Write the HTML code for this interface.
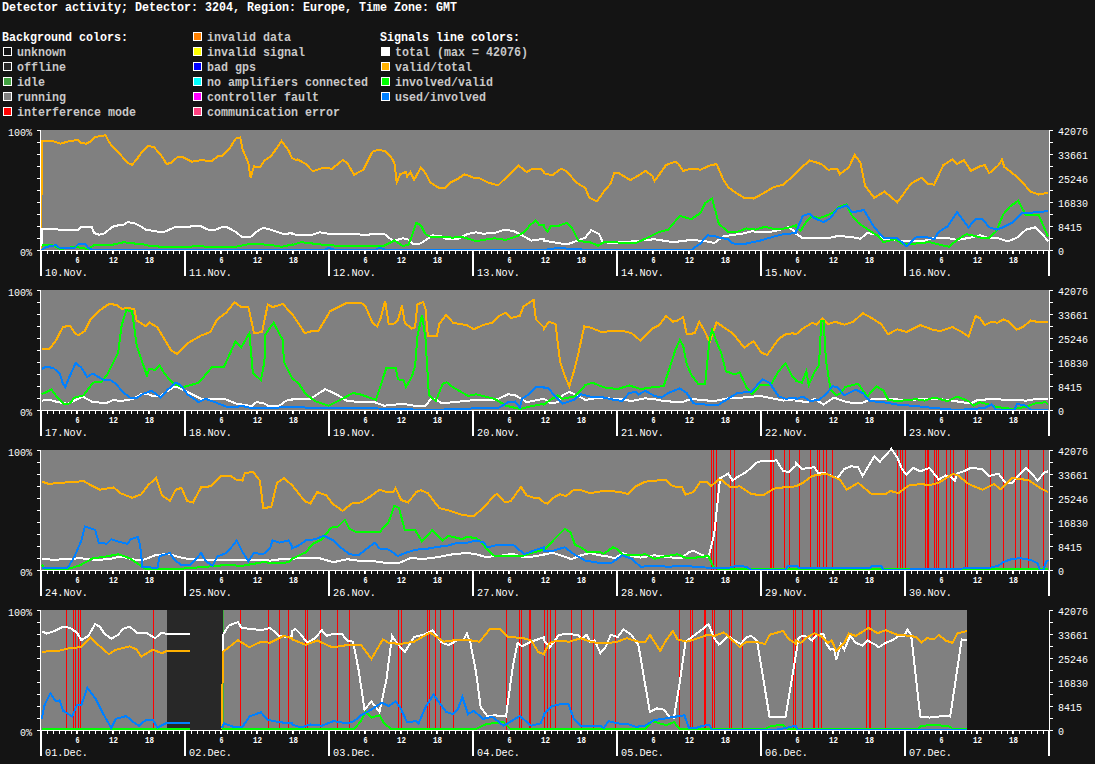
<!DOCTYPE html>
<html><head><meta charset="utf-8"><style>
html,body{margin:0;padding:0;background:#141414;overflow:hidden;width:1095px;height:764px}
</style></head><body>
<svg width="1095" height="764" viewBox="0 0 1095 764" style="display:block">
<rect x="0" y="0" width="1095" height="764" fill="#141414"/>
<g font-family='"Liberation Mono", monospace'>
<text x="2" y="11" font-size="12.2" fill="#fff" text-anchor="start" font-weight="bold" textLength="455" lengthAdjust="spacingAndGlyphs" >Detector activity; Detector: 3204, Region: Europe, Time Zone: GMT</text>
<text x="2" y="41" font-size="12.2" fill="#fff" text-anchor="start" font-weight="bold" textLength="126" lengthAdjust="spacingAndGlyphs" >Background colors:</text>
<text x="380" y="41" font-size="12.2" fill="#fff" text-anchor="start" font-weight="bold" textLength="140" lengthAdjust="spacingAndGlyphs" >Signals line colors:</text>
<rect x="3.5" y="47.5" width="8" height="8" fill="#141414" stroke="#fff" stroke-width="1"/>
<text x="17" y="56" font-size="12.2" fill="#c8c8c8" text-anchor="start" font-weight="bold" textLength="49" lengthAdjust="spacingAndGlyphs" >unknown</text>
<rect x="3.5" y="62.5" width="8" height="8" fill="#282828" stroke="#fff" stroke-width="1"/>
<text x="17" y="71" font-size="12.2" fill="#c8c8c8" text-anchor="start" font-weight="bold" textLength="49" lengthAdjust="spacingAndGlyphs" >offline</text>
<rect x="3.5" y="77.5" width="8" height="8" fill="#40a040" stroke="#fff" stroke-width="1"/>
<text x="17" y="86" font-size="12.2" fill="#c8c8c8" text-anchor="start" font-weight="bold" textLength="28" lengthAdjust="spacingAndGlyphs" >idle</text>
<rect x="3.5" y="92.5" width="8" height="8" fill="#808080" stroke="#fff" stroke-width="1"/>
<text x="17" y="101" font-size="12.2" fill="#c8c8c8" text-anchor="start" font-weight="bold" textLength="49" lengthAdjust="spacingAndGlyphs" >running</text>
<rect x="3.5" y="107.5" width="8" height="8" fill="#ff0000" stroke="#fff" stroke-width="1"/>
<text x="17" y="116" font-size="12.2" fill="#c8c8c8" text-anchor="start" font-weight="bold" textLength="119" lengthAdjust="spacingAndGlyphs" >interference mode</text>
<rect x="193.5" y="32.5" width="8" height="8" fill="#ff8000" stroke="#fff" stroke-width="1"/>
<text x="207" y="41" font-size="12.2" fill="#c8c8c8" text-anchor="start" font-weight="bold" textLength="84" lengthAdjust="spacingAndGlyphs" >invalid data</text>
<rect x="193.5" y="47.5" width="8" height="8" fill="#ffff00" stroke="#fff" stroke-width="1"/>
<text x="207" y="56" font-size="12.2" fill="#c8c8c8" text-anchor="start" font-weight="bold" textLength="98" lengthAdjust="spacingAndGlyphs" >invalid signal</text>
<rect x="193.5" y="62.5" width="8" height="8" fill="#0000ff" stroke="#fff" stroke-width="1"/>
<text x="207" y="71" font-size="12.2" fill="#c8c8c8" text-anchor="start" font-weight="bold" textLength="49" lengthAdjust="spacingAndGlyphs" >bad gps</text>
<rect x="193.5" y="77.5" width="8" height="8" fill="#00ffff" stroke="#fff" stroke-width="1"/>
<text x="207" y="86" font-size="12.2" fill="#c8c8c8" text-anchor="start" font-weight="bold" textLength="161" lengthAdjust="spacingAndGlyphs" >no amplifiers connected</text>
<rect x="193.5" y="92.5" width="8" height="8" fill="#ff00ff" stroke="#fff" stroke-width="1"/>
<text x="207" y="101" font-size="12.2" fill="#c8c8c8" text-anchor="start" font-weight="bold" textLength="112" lengthAdjust="spacingAndGlyphs" >controller fault</text>
<rect x="193.5" y="107.5" width="8" height="8" fill="#ff4080" stroke="#fff" stroke-width="1"/>
<text x="207" y="116" font-size="12.2" fill="#c8c8c8" text-anchor="start" font-weight="bold" textLength="133" lengthAdjust="spacingAndGlyphs" >communication error</text>
<rect x="381.5" y="47.5" width="8" height="8" fill="#ffffff" stroke="#fff" stroke-width="1"/>
<text x="395" y="56" font-size="12.2" fill="#c8c8c8" text-anchor="start" font-weight="bold" textLength="133" lengthAdjust="spacingAndGlyphs" >total (max = 42076)</text>
<rect x="381.5" y="62.5" width="8" height="8" fill="#ffb000" stroke="#fff" stroke-width="1"/>
<text x="395" y="71" font-size="12.2" fill="#c8c8c8" text-anchor="start" font-weight="bold" textLength="77" lengthAdjust="spacingAndGlyphs" >valid/total</text>
<rect x="381.5" y="77.5" width="8" height="8" fill="#00ff00" stroke="#fff" stroke-width="1"/>
<text x="395" y="86" font-size="12.2" fill="#c8c8c8" text-anchor="start" font-weight="bold" textLength="98" lengthAdjust="spacingAndGlyphs" >involved/valid</text>
<rect x="381.5" y="92.5" width="8" height="8" fill="#0080ff" stroke="#fff" stroke-width="1"/>
<text x="395" y="101" font-size="12.2" fill="#c8c8c8" text-anchor="start" font-weight="bold" textLength="91" lengthAdjust="spacingAndGlyphs" >used/involved</text>
</g>
<g transform="translate(0,0)">
<rect x="41" y="130" width="1008" height="120" fill="#808080"/>
<rect x="41" y="194" width="1" height="56" fill="#ffb000"/><polyline points="41.8,245.7 41.8,229.1 56.1,229.1 59.6,230.0 78.0,229.6 80.3,227.3 91.8,227.3 94.1,233.0 98.7,234.6 103.3,234.2 112.5,226.8 119.4,225.0 124.0,224.5 127.5,222.2 134.4,223.1 139.0,225.4 145.9,229.6 159.7,231.9 164.3,231.9 175.8,226.8 201.1,226.3 208.0,229.6 214.9,230.0 223.0,226.8 226.4,226.8 235.6,231.9 241.4,236.5 250.6,236.9 256.3,231.9 263.2,227.7 270.1,229.6 283.9,234.2 292.0,233.0 292.0,234.2 301.2,235.3 310.4,235.3 319.6,232.3 331.1,234.2 358.7,234.2 365.6,235.5 372.5,233.7 384.1,233.7 393.3,241.1 402.5,238.3 407.1,238.8 414.0,244.5 420.9,243.4 432.4,235.3 441.6,236.5 446.2,238.8 457.7,238.8 466.9,234.2 476.1,232.3 483.0,233.7 494.5,233.0 503.7,230.0 512.9,230.7 522.1,235.3 531.3,240.6 544.0,238.8 544.0,240.6 553.2,242.2 567.0,244.5 576.2,241.1 585.4,237.6 591.2,230.0 599.2,234.2 602.7,242.2 613.0,242.9 636.1,241.1 654.5,239.2 672.9,242.2 691.3,239.9 705.1,241.1 714.3,242.9 723.5,236.5 730.4,235.3 741.9,233.7 751.1,231.4 762.6,231.9 774.1,231.4 787.9,227.3 796.0,231.9 796.0,233.7 802.9,238.3 828.2,238.3 837.4,236.0 851.2,236.9 860.4,238.8 867.3,233.0 874.2,234.2 883.5,238.8 899.6,240.6 924.9,240.6 934.1,237.6 945.6,237.6 957.1,239.9 970.9,237.6 980.1,235.3 989.3,238.3 998.5,238.3 1007.7,241.5 1016.9,237.6 1026.1,229.6 1035.3,227.3 1042.2,234.2 1048.0,241.1" fill="none" stroke="#ffffff" stroke-width="2" stroke-linejoin="miter" shape-rendering="crispEdges"/>
<polyline points="41.8,195.0 41.8,141.0 52.7,141.0 60.7,143.7 67.6,141.6 78.0,139.8 80.3,142.8 86.0,143.7 89.5,142.1 94.1,137.5 98.7,136.4 105.6,135.2 109.0,142.1 113.6,147.9 120.5,154.8 127.5,162.8 132.1,164.7 136.7,159.4 142.4,151.3 148.2,146.0 153.9,147.2 160.8,154.8 166.6,164.0 171.2,162.8 178.1,156.6 182.7,157.1 191.9,161.7 201.1,160.1 211.5,161.2 218.4,155.9 221.8,155.9 229.9,147.9 235.6,138.7 240.2,137.5 242.5,149.0 248.3,162.8 250.6,177.8 254.0,166.3 259.8,167.4 264.4,160.5 271.3,155.9 281.6,141.0 288.5,150.2 292.0,158.2 292.0,158.2 296.6,160.1 297.8,159.4 305.8,164.0 312.7,171.3 321.9,168.1 332.3,168.6 342.6,160.1 347.2,162.8 354.1,174.8 363.3,169.7 372.5,151.8 378.3,149.5 385.2,151.3 391.0,157.1 394.4,162.8 396.7,182.4 400.2,174.3 405.9,172.0 407.1,176.6 410.5,172.0 414.0,180.1 420.9,167.4 425.5,173.2 430.1,182.4 439.3,188.1 445.0,188.1 450.8,182.4 457.7,178.9 464.6,174.3 473.8,177.8 478.4,177.8 487.6,182.4 498.0,185.4 508.3,175.5 518.7,165.6 526.7,172.0 531.3,169.3 540.5,168.6 544.0,172.0 544.0,173.2 548.6,174.3 552.1,175.5 561.3,168.6 567.0,171.6 576.2,182.4 585.4,188.1 588.9,197.3 596.9,201.5 603.8,191.6 610.7,183.5 614.2,173.2 618.8,173.2 630.3,180.1 638.4,175.5 645.3,170.9 652.2,175.5 654.5,181.2 666.0,165.1 675.2,161.7 678.6,164.0 683.2,170.9 691.3,168.6 700.5,169.7 709.7,165.6 716.6,164.0 723.5,180.1 728.1,187.0 735.0,192.3 744.2,197.8 753.4,198.5 760.3,195.0 774.1,187.0 783.3,184.7 796.0,173.2 796.0,173.2 802.9,166.3 809.8,160.5 821.3,164.0 828.2,169.7 837.4,168.6 839.7,174.3 848.9,167.4 854.7,154.8 860.4,162.8 865.0,185.8 874.2,197.8 884.6,191.6 897.3,202.4 911.1,183.5 921.4,177.8 927.2,183.5 934.1,184.7 943.3,165.1 952.5,159.4 957.1,164.0 964.0,160.1 970.9,170.9 980.1,166.3 984.7,165.1 989.3,173.2 998.5,165.1 1002.0,159.4 1004.3,167.0 1016.9,176.6 1030.7,191.6 1038.8,194.6 1048.0,192.7" fill="none" stroke="#ffb000" stroke-width="2" stroke-linejoin="miter" shape-rendering="crispEdges"/>
<polyline points="41.8,245.7 46.9,244.5 53.8,245.7 60.7,249.0 74.5,246.8 88.3,249.0 95.2,244.5 113.6,244.5 124.0,242.2 132.1,243.4 141.3,243.8 150.5,246.1 164.3,246.8 182.7,247.3 196.5,246.1 219.5,247.3 233.3,247.3 247.1,244.5 256.3,243.8 272.4,245.2 281.6,246.8 292.0,244.5 292.0,245.2 301.2,242.2 315.0,243.8 326.5,245.2 349.5,246.1 372.5,246.1 384.1,245.7 394.4,240.6 402.5,245.7 408.2,245.2 411.7,236.5 416.3,222.7 420.9,225.4 425.5,234.2 430.1,236.5 453.1,237.6 462.3,236.9 476.1,241.1 487.6,239.2 494.5,238.3 506.0,239.9 517.5,236.0 524.4,231.9 530.2,225.0 535.9,220.4 539.4,225.4 544.0,225.4 544.0,227.3 547.5,231.4 550.9,226.1 557.8,226.1 567.0,222.7 571.6,227.3 578.5,241.1 590.0,242.2 598.1,245.7 603.8,242.2 636.1,242.9 645.3,238.8 659.1,231.9 668.3,229.6 679.8,215.8 691.3,219.2 700.5,213.0 705.1,203.1 712.0,198.5 718.9,223.8 728.1,231.9 737.3,231.9 746.5,228.4 755.7,229.6 764.9,226.8 774.1,229.1 785.6,228.4 796.0,225.4 796.0,227.3 800.6,230.7 806.4,221.5 812.1,216.2 819.0,218.1 825.9,215.8 834.0,212.3 839.7,206.5 846.6,204.2 851.2,214.6 858.1,222.7 869.6,230.7 878.8,236.5 883.5,242.2 895.0,239.2 904.2,244.5 913.4,243.8 929.5,242.2 938.7,244.5 949.0,246.8 957.1,239.9 966.3,234.2 975.5,236.0 980.1,237.6 989.3,237.6 996.2,231.4 1003.1,214.6 1010.0,206.5 1018.1,200.8 1023.8,211.2 1026.1,215.3 1038.8,215.3 1048.0,236.5" fill="none" stroke="#00ff00" stroke-width="2" stroke-linejoin="miter" shape-rendering="crispEdges"/>
<polyline points="41.8,250.0 46.9,246.8 56.1,245.2 59.6,248.0 74.5,248.0 78.0,244.5 84.9,243.8 88.3,248.0 92.9,250.0 270.1,250.0 292.0,250.0 292.0,250.0 324.2,250.0 328.8,248.0 335.7,250.0 374.8,250.0 379.5,247.7 386.4,250.0 512.9,250.0 517.5,250.0 540.5,250.0 544.0,250.0 544.0,250.0 557.8,248.0 590.0,250.0 691.3,250.0 700.5,243.4 707.4,235.3 714.3,236.0 721.2,238.3 728.1,238.8 732.7,243.4 741.9,244.5 760.3,240.6 774.1,236.5 783.3,234.2 796.0,233.0 796.0,231.9 802.9,215.8 809.8,213.5 814.4,218.1 823.6,222.2 830.5,218.1 837.4,208.8 846.6,205.4 852.4,212.3 858.1,211.2 863.9,210.0 874.2,227.3 883.5,237.6 897.3,238.3 906.5,246.1 915.7,237.6 924.9,236.5 934.1,239.2 938.7,231.9 947.9,226.1 957.1,212.3 968.6,227.3 975.5,219.2 982.4,219.2 989.3,227.3 996.2,229.6 1003.1,227.3 1012.3,222.7 1021.5,213.5 1035.3,212.3 1048.0,211.2" fill="none" stroke="#0080ff" stroke-width="2" stroke-linejoin="miter" shape-rendering="crispEdges"/>
<g fill="#fff" shape-rendering="crispEdges">
<rect x="40" y="130" width="1" height="121"/>
<rect x="1049" y="130" width="1" height="121"/>
<rect x="37" y="250" width="1016" height="1"/>
<rect x="37" y="130" width="3" height="1"/>
<rect x="1050" y="130" width="3" height="1"/>
<rect x="37" y="142" width="3" height="1"/>
<rect x="1050" y="142" width="3" height="1"/>
<rect x="37" y="154" width="3" height="1"/>
<rect x="1050" y="154" width="3" height="1"/>
<rect x="37" y="166" width="3" height="1"/>
<rect x="1050" y="166" width="3" height="1"/>
<rect x="37" y="178" width="3" height="1"/>
<rect x="1050" y="178" width="3" height="1"/>
<rect x="37" y="190" width="3" height="1"/>
<rect x="1050" y="190" width="3" height="1"/>
<rect x="37" y="202" width="3" height="1"/>
<rect x="1050" y="202" width="3" height="1"/>
<rect x="37" y="214" width="3" height="1"/>
<rect x="1050" y="214" width="3" height="1"/>
<rect x="37" y="226" width="3" height="1"/>
<rect x="1050" y="226" width="3" height="1"/>
<rect x="37" y="238" width="3" height="1"/>
<rect x="1050" y="238" width="3" height="1"/>
<rect x="37" y="250" width="3" height="1"/>
<rect x="1050" y="250" width="3" height="1"/>
<rect x="40" y="251" width="2" height="25"/>
<rect x="47" y="251" width="1" height="3"/>
<rect x="53" y="251" width="1" height="3"/>
<rect x="59" y="251" width="1" height="3"/>
<rect x="65" y="251" width="1" height="3"/>
<rect x="71" y="251" width="1" height="3"/>
<rect x="76" y="251" width="2" height="3"/>
<rect x="83" y="251" width="1" height="3"/>
<rect x="89" y="251" width="1" height="3"/>
<rect x="95" y="251" width="1" height="3"/>
<rect x="101" y="251" width="1" height="3"/>
<rect x="107" y="251" width="1" height="3"/>
<rect x="112" y="251" width="2" height="3"/>
<rect x="119" y="251" width="1" height="3"/>
<rect x="125" y="251" width="1" height="3"/>
<rect x="131" y="251" width="1" height="3"/>
<rect x="137" y="251" width="1" height="3"/>
<rect x="143" y="251" width="1" height="3"/>
<rect x="148" y="251" width="2" height="3"/>
<rect x="155" y="251" width="1" height="3"/>
<rect x="161" y="251" width="1" height="3"/>
<rect x="167" y="251" width="1" height="3"/>
<rect x="173" y="251" width="1" height="3"/>
<rect x="179" y="251" width="1" height="3"/>
<rect x="184" y="251" width="2" height="25"/>
<rect x="191" y="251" width="1" height="3"/>
<rect x="197" y="251" width="1" height="3"/>
<rect x="203" y="251" width="1" height="3"/>
<rect x="209" y="251" width="1" height="3"/>
<rect x="215" y="251" width="1" height="3"/>
<rect x="220" y="251" width="2" height="3"/>
<rect x="227" y="251" width="1" height="3"/>
<rect x="233" y="251" width="1" height="3"/>
<rect x="239" y="251" width="1" height="3"/>
<rect x="245" y="251" width="1" height="3"/>
<rect x="251" y="251" width="1" height="3"/>
<rect x="256" y="251" width="2" height="3"/>
<rect x="263" y="251" width="1" height="3"/>
<rect x="269" y="251" width="1" height="3"/>
<rect x="275" y="251" width="1" height="3"/>
<rect x="281" y="251" width="1" height="3"/>
<rect x="287" y="251" width="1" height="3"/>
<rect x="292" y="251" width="2" height="3"/>
<rect x="299" y="251" width="1" height="3"/>
<rect x="305" y="251" width="1" height="3"/>
<rect x="311" y="251" width="1" height="3"/>
<rect x="317" y="251" width="1" height="3"/>
<rect x="323" y="251" width="1" height="3"/>
<rect x="328" y="251" width="2" height="25"/>
<rect x="335" y="251" width="1" height="3"/>
<rect x="341" y="251" width="1" height="3"/>
<rect x="347" y="251" width="1" height="3"/>
<rect x="353" y="251" width="1" height="3"/>
<rect x="359" y="251" width="1" height="3"/>
<rect x="364" y="251" width="2" height="3"/>
<rect x="371" y="251" width="1" height="3"/>
<rect x="377" y="251" width="1" height="3"/>
<rect x="383" y="251" width="1" height="3"/>
<rect x="389" y="251" width="1" height="3"/>
<rect x="395" y="251" width="1" height="3"/>
<rect x="400" y="251" width="2" height="3"/>
<rect x="407" y="251" width="1" height="3"/>
<rect x="413" y="251" width="1" height="3"/>
<rect x="419" y="251" width="1" height="3"/>
<rect x="425" y="251" width="1" height="3"/>
<rect x="431" y="251" width="1" height="3"/>
<rect x="436" y="251" width="2" height="3"/>
<rect x="443" y="251" width="1" height="3"/>
<rect x="449" y="251" width="1" height="3"/>
<rect x="455" y="251" width="1" height="3"/>
<rect x="461" y="251" width="1" height="3"/>
<rect x="467" y="251" width="1" height="3"/>
<rect x="472" y="251" width="2" height="25"/>
<rect x="479" y="251" width="1" height="3"/>
<rect x="485" y="251" width="1" height="3"/>
<rect x="491" y="251" width="1" height="3"/>
<rect x="497" y="251" width="1" height="3"/>
<rect x="503" y="251" width="1" height="3"/>
<rect x="508" y="251" width="2" height="3"/>
<rect x="515" y="251" width="1" height="3"/>
<rect x="521" y="251" width="1" height="3"/>
<rect x="527" y="251" width="1" height="3"/>
<rect x="533" y="251" width="1" height="3"/>
<rect x="539" y="251" width="1" height="3"/>
<rect x="544" y="251" width="2" height="3"/>
<rect x="551" y="251" width="1" height="3"/>
<rect x="557" y="251" width="1" height="3"/>
<rect x="563" y="251" width="1" height="3"/>
<rect x="569" y="251" width="1" height="3"/>
<rect x="575" y="251" width="1" height="3"/>
<rect x="580" y="251" width="2" height="3"/>
<rect x="587" y="251" width="1" height="3"/>
<rect x="593" y="251" width="1" height="3"/>
<rect x="599" y="251" width="1" height="3"/>
<rect x="605" y="251" width="1" height="3"/>
<rect x="611" y="251" width="1" height="3"/>
<rect x="616" y="251" width="2" height="25"/>
<rect x="623" y="251" width="1" height="3"/>
<rect x="629" y="251" width="1" height="3"/>
<rect x="635" y="251" width="1" height="3"/>
<rect x="641" y="251" width="1" height="3"/>
<rect x="647" y="251" width="1" height="3"/>
<rect x="652" y="251" width="2" height="3"/>
<rect x="659" y="251" width="1" height="3"/>
<rect x="665" y="251" width="1" height="3"/>
<rect x="671" y="251" width="1" height="3"/>
<rect x="677" y="251" width="1" height="3"/>
<rect x="683" y="251" width="1" height="3"/>
<rect x="688" y="251" width="2" height="3"/>
<rect x="695" y="251" width="1" height="3"/>
<rect x="701" y="251" width="1" height="3"/>
<rect x="707" y="251" width="1" height="3"/>
<rect x="713" y="251" width="1" height="3"/>
<rect x="719" y="251" width="1" height="3"/>
<rect x="724" y="251" width="2" height="3"/>
<rect x="731" y="251" width="1" height="3"/>
<rect x="737" y="251" width="1" height="3"/>
<rect x="743" y="251" width="1" height="3"/>
<rect x="749" y="251" width="1" height="3"/>
<rect x="755" y="251" width="1" height="3"/>
<rect x="760" y="251" width="2" height="25"/>
<rect x="767" y="251" width="1" height="3"/>
<rect x="773" y="251" width="1" height="3"/>
<rect x="779" y="251" width="1" height="3"/>
<rect x="785" y="251" width="1" height="3"/>
<rect x="791" y="251" width="1" height="3"/>
<rect x="796" y="251" width="2" height="3"/>
<rect x="803" y="251" width="1" height="3"/>
<rect x="809" y="251" width="1" height="3"/>
<rect x="815" y="251" width="1" height="3"/>
<rect x="821" y="251" width="1" height="3"/>
<rect x="827" y="251" width="1" height="3"/>
<rect x="832" y="251" width="2" height="3"/>
<rect x="839" y="251" width="1" height="3"/>
<rect x="845" y="251" width="1" height="3"/>
<rect x="851" y="251" width="1" height="3"/>
<rect x="857" y="251" width="1" height="3"/>
<rect x="863" y="251" width="1" height="3"/>
<rect x="868" y="251" width="2" height="3"/>
<rect x="875" y="251" width="1" height="3"/>
<rect x="881" y="251" width="1" height="3"/>
<rect x="887" y="251" width="1" height="3"/>
<rect x="893" y="251" width="1" height="3"/>
<rect x="899" y="251" width="1" height="3"/>
<rect x="904" y="251" width="2" height="25"/>
<rect x="911" y="251" width="1" height="3"/>
<rect x="917" y="251" width="1" height="3"/>
<rect x="923" y="251" width="1" height="3"/>
<rect x="929" y="251" width="1" height="3"/>
<rect x="935" y="251" width="1" height="3"/>
<rect x="940" y="251" width="2" height="3"/>
<rect x="947" y="251" width="1" height="3"/>
<rect x="953" y="251" width="1" height="3"/>
<rect x="959" y="251" width="1" height="3"/>
<rect x="965" y="251" width="1" height="3"/>
<rect x="971" y="251" width="1" height="3"/>
<rect x="976" y="251" width="2" height="3"/>
<rect x="983" y="251" width="1" height="3"/>
<rect x="989" y="251" width="1" height="3"/>
<rect x="995" y="251" width="1" height="3"/>
<rect x="1001" y="251" width="1" height="3"/>
<rect x="1007" y="251" width="1" height="3"/>
<rect x="1012" y="251" width="2" height="3"/>
<rect x="1019" y="251" width="1" height="3"/>
<rect x="1025" y="251" width="1" height="3"/>
<rect x="1031" y="251" width="1" height="3"/>
<rect x="1037" y="251" width="1" height="3"/>
<rect x="1043" y="251" width="1" height="3"/>
<rect x="1048" y="251" width="2" height="25"/>
</g>
<g font-family='"Liberation Mono", monospace' fill="#fff">
<text x="32" y="136" font-size="11.8" fill="#fff" text-anchor="end" textLength="24" lengthAdjust="spacingAndGlyphs" >100%</text>
<text x="32" y="256" font-size="11.8" fill="#fff" text-anchor="end" textLength="12" lengthAdjust="spacingAndGlyphs" >0%</text>
<text x="1058" y="135" font-size="11.8" fill="#fff" text-anchor="start" textLength="30" lengthAdjust="spacingAndGlyphs" >42076</text>
<text x="1058" y="159" font-size="11.8" fill="#fff" text-anchor="start" textLength="30" lengthAdjust="spacingAndGlyphs" >33661</text>
<text x="1058" y="183" font-size="11.8" fill="#fff" text-anchor="start" textLength="30" lengthAdjust="spacingAndGlyphs" >25246</text>
<text x="1058" y="207" font-size="11.8" fill="#fff" text-anchor="start" textLength="30" lengthAdjust="spacingAndGlyphs" >16830</text>
<text x="1058" y="231" font-size="11.8" fill="#fff" text-anchor="start" textLength="24" lengthAdjust="spacingAndGlyphs" >8415</text>
<text x="1058" y="255" font-size="11.8" fill="#fff" text-anchor="start" textLength="6" lengthAdjust="spacingAndGlyphs" >0</text>
<text x="45" y="276" font-size="11.8" fill="#fff" text-anchor="start" textLength="43" lengthAdjust="spacingAndGlyphs" >10.Nov.</text>
<text x="77.5" y="263" font-size="8.2" fill="#fff" text-anchor="middle" font-weight="bold" textLength="4" lengthAdjust="spacingAndGlyphs" >6</text>
<text x="113.5" y="263" font-size="8.2" fill="#fff" text-anchor="middle" font-weight="bold" textLength="9" lengthAdjust="spacingAndGlyphs" >12</text>
<text x="149.5" y="263" font-size="8.2" fill="#fff" text-anchor="middle" font-weight="bold" textLength="9" lengthAdjust="spacingAndGlyphs" >18</text>
<text x="189" y="276" font-size="11.8" fill="#fff" text-anchor="start" textLength="43" lengthAdjust="spacingAndGlyphs" >11.Nov.</text>
<text x="221.5" y="263" font-size="8.2" fill="#fff" text-anchor="middle" font-weight="bold" textLength="4" lengthAdjust="spacingAndGlyphs" >6</text>
<text x="257.5" y="263" font-size="8.2" fill="#fff" text-anchor="middle" font-weight="bold" textLength="9" lengthAdjust="spacingAndGlyphs" >12</text>
<text x="293.5" y="263" font-size="8.2" fill="#fff" text-anchor="middle" font-weight="bold" textLength="9" lengthAdjust="spacingAndGlyphs" >18</text>
<text x="333" y="276" font-size="11.8" fill="#fff" text-anchor="start" textLength="43" lengthAdjust="spacingAndGlyphs" >12.Nov.</text>
<text x="365.5" y="263" font-size="8.2" fill="#fff" text-anchor="middle" font-weight="bold" textLength="4" lengthAdjust="spacingAndGlyphs" >6</text>
<text x="401.5" y="263" font-size="8.2" fill="#fff" text-anchor="middle" font-weight="bold" textLength="9" lengthAdjust="spacingAndGlyphs" >12</text>
<text x="437.5" y="263" font-size="8.2" fill="#fff" text-anchor="middle" font-weight="bold" textLength="9" lengthAdjust="spacingAndGlyphs" >18</text>
<text x="477" y="276" font-size="11.8" fill="#fff" text-anchor="start" textLength="43" lengthAdjust="spacingAndGlyphs" >13.Nov.</text>
<text x="509.5" y="263" font-size="8.2" fill="#fff" text-anchor="middle" font-weight="bold" textLength="4" lengthAdjust="spacingAndGlyphs" >6</text>
<text x="545.5" y="263" font-size="8.2" fill="#fff" text-anchor="middle" font-weight="bold" textLength="9" lengthAdjust="spacingAndGlyphs" >12</text>
<text x="581.5" y="263" font-size="8.2" fill="#fff" text-anchor="middle" font-weight="bold" textLength="9" lengthAdjust="spacingAndGlyphs" >18</text>
<text x="621" y="276" font-size="11.8" fill="#fff" text-anchor="start" textLength="43" lengthAdjust="spacingAndGlyphs" >14.Nov.</text>
<text x="653.5" y="263" font-size="8.2" fill="#fff" text-anchor="middle" font-weight="bold" textLength="4" lengthAdjust="spacingAndGlyphs" >6</text>
<text x="689.5" y="263" font-size="8.2" fill="#fff" text-anchor="middle" font-weight="bold" textLength="9" lengthAdjust="spacingAndGlyphs" >12</text>
<text x="725.5" y="263" font-size="8.2" fill="#fff" text-anchor="middle" font-weight="bold" textLength="9" lengthAdjust="spacingAndGlyphs" >18</text>
<text x="765" y="276" font-size="11.8" fill="#fff" text-anchor="start" textLength="43" lengthAdjust="spacingAndGlyphs" >15.Nov.</text>
<text x="797.5" y="263" font-size="8.2" fill="#fff" text-anchor="middle" font-weight="bold" textLength="4" lengthAdjust="spacingAndGlyphs" >6</text>
<text x="833.5" y="263" font-size="8.2" fill="#fff" text-anchor="middle" font-weight="bold" textLength="9" lengthAdjust="spacingAndGlyphs" >12</text>
<text x="869.5" y="263" font-size="8.2" fill="#fff" text-anchor="middle" font-weight="bold" textLength="9" lengthAdjust="spacingAndGlyphs" >18</text>
<text x="909" y="276" font-size="11.8" fill="#fff" text-anchor="start" textLength="43" lengthAdjust="spacingAndGlyphs" >16.Nov.</text>
<text x="941.5" y="263" font-size="8.2" fill="#fff" text-anchor="middle" font-weight="bold" textLength="4" lengthAdjust="spacingAndGlyphs" >6</text>
<text x="977.5" y="263" font-size="8.2" fill="#fff" text-anchor="middle" font-weight="bold" textLength="9" lengthAdjust="spacingAndGlyphs" >12</text>
<text x="1013.5" y="263" font-size="8.2" fill="#fff" text-anchor="middle" font-weight="bold" textLength="9" lengthAdjust="spacingAndGlyphs" >18</text>
</g>
</g>
<g transform="translate(0,160)">
<rect x="41" y="130" width="1008" height="120" fill="#808080"/>
<!--RED1--><polyline points="41.8,240.6 49.2,239.9 58.4,242.2 67.6,243.8 82.6,236.5 92.9,242.2 106.7,242.9 113.6,239.9 120.5,241.1 132.1,239.2 141.3,234.2 148.2,234.2 152.8,236.0 159.7,236.5 173.5,227.3 178.1,227.3 189.6,233.0 201.1,238.8 214.9,239.2 224.1,238.8 235.6,243.4 251.7,246.1 256.3,242.2 263.2,242.9 267.8,245.7 279.3,245.7 286.2,240.6 292.0,239.9 292.0,239.2 310.4,238.8 325.4,229.1 338.0,235.3 347.2,241.1 365.6,242.2 374.8,242.2 384.1,245.7 402.5,243.8 416.3,246.1 425.5,245.7 431.2,238.8 437.0,239.9 441.6,243.4 453.1,242.2 476.1,239.9 495.7,239.9 508.3,234.2 515.2,235.3 522.1,239.2 526.7,242.2 538.2,239.9 544.0,238.8 544.0,238.8 550.9,243.4 557.8,242.2 562.4,235.3 569.3,231.9 578.5,236.0 585.4,239.9 599.2,237.6 613.0,238.8 622.2,239.2 631.5,241.1 645.3,238.3 654.5,239.2 663.7,241.1 682.1,242.2 691.3,238.8 700.5,239.9 714.3,241.1 728.1,238.3 741.9,237.6 760.3,236.0 774.1,238.8 783.3,240.6 796.0,239.2 796.0,240.6 807.5,242.2 814.4,238.8 823.6,244.5 834.0,237.6 846.6,242.2 860.4,243.4 871.9,239.2 888.1,238.8 904.2,239.9 924.9,239.2 934.1,238.8 947.9,239.9 961.7,242.2 970.9,243.4 977.8,239.9 991.6,239.2 1012.3,239.9 1026.1,240.6 1037.6,238.8 1048.0,238.8" fill="none" stroke="#ffffff" stroke-width="2" stroke-linejoin="miter" shape-rendering="crispEdges"/>
<polyline points="41.8,189.3 49.2,189.3 56.1,180.1 63.0,167.0 69.9,165.6 75.7,174.3 79.1,174.8 84.9,170.9 90.6,159.4 99.8,150.2 109.0,144.0 117.1,144.9 121.7,149.0 127.5,147.9 134.4,149.0 136.7,160.5 145.9,166.3 149.3,162.4 157.4,167.4 164.3,178.9 171.2,190.4 176.9,193.9 187.3,183.5 201.1,175.5 210.3,172.0 217.2,159.4 226.4,152.5 234.5,142.1 241.4,147.2 248.3,146.7 254.0,173.2 262.1,172.0 267.8,144.4 272.4,147.2 282.8,144.0 288.5,150.2 292.0,153.6 292.0,153.6 296.6,160.5 304.7,173.2 312.7,170.9 318.5,170.9 330.0,151.3 346.1,143.3 361.0,142.6 365.6,146.7 372.5,162.8 377.2,166.3 380.6,158.2 385.2,141.0 388.7,164.0 393.3,164.0 397.9,160.5 402.0,145.6 404.8,162.8 411.7,168.6 415.1,167.4 417.4,144.4 423.2,142.1 425.5,149.0 427.8,175.5 437.0,175.5 439.3,164.0 446.2,154.8 453.1,162.8 466.9,165.1 473.8,169.3 483.0,165.1 492.2,162.8 499.1,155.9 506.0,152.5 510.6,158.2 519.8,155.9 523.3,146.7 533.6,139.8 535.9,159.4 544.0,167.4 544.0,168.6 548.6,161.7 555.5,164.0 560.1,201.9 564.7,215.8 569.3,226.1 573.9,211.2 578.5,192.7 584.3,166.3 590.0,167.4 601.5,172.0 613.0,170.9 622.2,170.9 631.5,173.2 640.7,180.8 652.2,168.6 659.1,165.1 666.0,155.9 672.9,161.7 677.5,160.5 683.2,157.1 686.7,174.3 694.7,173.2 699.3,161.7 705.1,172.0 709.7,182.4 716.6,162.4 725.8,168.6 732.7,173.2 744.2,187.7 753.4,181.2 761.5,192.7 767.2,195.0 778.7,178.9 785.6,174.3 792.5,173.2 796.0,174.3 796.0,174.3 802.9,168.6 812.1,162.8 816.7,164.7 822.5,158.2 828.2,164.0 835.1,161.7 844.3,164.7 853.5,161.7 862.7,153.2 871.9,158.2 881.2,164.0 888.1,174.3 897.3,169.3 906.5,172.0 920.3,165.1 934.1,170.2 941.0,170.9 952.5,167.0 961.7,172.0 968.6,176.6 975.5,155.9 980.1,158.2 984.7,165.1 991.6,161.7 997.4,162.8 1003.1,159.4 1007.7,161.0 1016.9,169.7 1023.8,166.3 1030.7,160.5 1039.9,162.4 1048.0,161.7" fill="none" stroke="#ffb000" stroke-width="2" stroke-linejoin="miter" shape-rendering="crispEdges"/>
<polyline points="41.8,234.2 51.5,229.6 58.4,238.8 64.2,244.5 69.9,243.4 74.5,237.6 83.7,235.3 92.9,222.7 102.1,221.5 107.9,213.5 118.2,192.7 121.7,165.1 126.3,150.2 132.1,151.3 136.7,185.8 147.0,215.8 149.3,208.8 155.1,210.0 159.7,205.4 164.3,213.5 173.5,223.8 182.7,227.3 198.8,222.7 212.6,206.5 224.1,206.5 235.6,181.2 241.4,187.0 249.4,173.2 252.9,213.5 260.9,219.9 264.4,201.9 265.5,174.3 273.6,162.8 282.8,180.1 283.9,201.9 292.0,218.1 292.0,218.1 298.9,223.8 305.8,234.2 315.0,241.1 321.9,243.4 328.8,245.7 338.0,241.1 353.0,233.0 361.0,234.6 376.0,239.9 386.4,207.7 395.6,207.7 397.9,219.2 403.6,220.4 405.9,227.3 411.7,216.9 415.1,206.5 417.4,176.6 422.0,154.8 425.5,178.9 428.9,235.3 435.8,241.1 442.7,223.8 446.7,222.2 453.1,227.3 468.1,236.0 476.1,234.2 494.5,238.8 506.0,245.7 519.8,249.0 533.6,245.7 544.0,243.8 544.0,244.5 548.6,241.1 557.8,235.3 562.4,238.8 573.9,236.5 578.5,233.0 585.4,225.0 592.3,222.7 603.8,227.3 617.6,229.1 629.2,225.4 640.7,229.1 652.2,227.3 663.7,226.1 669.4,208.8 675.2,190.4 679.8,180.1 683.2,185.8 686.7,204.2 691.3,214.6 698.2,223.8 705.1,223.8 709.7,178.9 712.0,169.7 717.8,184.7 721.2,192.7 725.8,211.2 735.0,214.6 739.6,212.3 746.5,227.3 752.3,234.2 760.3,225.0 770.7,225.0 778.7,211.2 785.6,203.1 792.5,216.9 796.0,220.4 796.0,220.8 801.8,222.7 806.4,211.2 808.7,225.0 814.4,212.3 819.0,205.4 821.3,160.5 823.6,160.5 825.9,199.6 830.5,229.6 836.3,235.3 840.9,233.0 845.5,226.8 858.1,223.8 867.3,236.5 876.5,226.1 883.5,230.7 888.1,239.9 897.3,241.1 915.7,239.2 924.9,240.6 934.1,237.6 947.9,241.1 957.1,236.5 968.6,241.1 973.2,245.7 980.1,242.2 989.3,244.5 996.2,246.8 1012.3,249.0 1026.1,246.8 1035.3,243.4 1045.7,242.2 1048.0,244.5" fill="none" stroke="#00ff00" stroke-width="2" stroke-linejoin="miter" shape-rendering="crispEdges"/>
<polyline points="41.8,208.8 46.9,206.5 53.8,208.4 59.6,213.5 63.0,223.8 65.3,227.3 68.8,218.1 75.7,203.1 81.4,207.7 87.2,216.9 92.9,213.5 102.1,219.2 105.6,220.4 110.2,219.9 115.9,223.8 122.8,231.9 130.9,238.3 136.7,238.3 142.4,234.2 151.6,230.7 160.8,237.6 167.7,229.6 175.8,222.7 180.4,225.0 187.3,234.2 198.8,242.2 205.7,238.8 214.9,242.2 228.7,247.5 242.5,246.1 251.7,248.0 270.1,248.0 292.0,246.8 292.0,246.8 315.0,248.0 361.0,248.0 430.1,250.0 499.1,247.5 508.3,242.2 515.2,241.5 519.8,248.0 522.1,238.8 529.0,234.2 535.9,226.8 544.0,226.8 544.0,228.4 548.6,228.4 553.2,234.2 562.4,243.8 573.9,239.9 580.8,234.2 590.0,236.5 599.2,236.5 610.7,239.2 622.2,241.1 629.2,233.0 636.1,231.9 638.4,234.6 645.3,230.7 654.5,236.0 661.4,237.6 668.3,233.0 679.8,228.4 686.7,233.0 693.6,243.4 705.1,244.5 718.9,244.5 728.1,238.8 737.3,233.0 751.1,231.9 762.6,219.2 769.5,222.7 778.7,236.5 785.6,238.8 796.0,237.6 796.0,239.2 802.9,236.5 809.8,241.1 819.0,239.9 825.9,234.2 832.8,226.1 837.4,227.3 844.3,235.3 855.8,229.6 862.7,233.0 869.6,241.1 883.5,242.2 897.3,244.5 915.7,246.1 934.1,248.0 957.1,250.0 984.7,248.0 991.6,244.5 996.2,250.0 1014.6,250.0 1016.9,243.8 1026.1,245.7 1030.7,250.0 1048.0,250.0" fill="none" stroke="#0080ff" stroke-width="2" stroke-linejoin="miter" shape-rendering="crispEdges"/>
<g fill="#fff" shape-rendering="crispEdges">
<rect x="40" y="130" width="1" height="121"/>
<rect x="1049" y="130" width="1" height="121"/>
<rect x="37" y="250" width="1016" height="1"/>
<rect x="37" y="130" width="3" height="1"/>
<rect x="1050" y="130" width="3" height="1"/>
<rect x="37" y="142" width="3" height="1"/>
<rect x="1050" y="142" width="3" height="1"/>
<rect x="37" y="154" width="3" height="1"/>
<rect x="1050" y="154" width="3" height="1"/>
<rect x="37" y="166" width="3" height="1"/>
<rect x="1050" y="166" width="3" height="1"/>
<rect x="37" y="178" width="3" height="1"/>
<rect x="1050" y="178" width="3" height="1"/>
<rect x="37" y="190" width="3" height="1"/>
<rect x="1050" y="190" width="3" height="1"/>
<rect x="37" y="202" width="3" height="1"/>
<rect x="1050" y="202" width="3" height="1"/>
<rect x="37" y="214" width="3" height="1"/>
<rect x="1050" y="214" width="3" height="1"/>
<rect x="37" y="226" width="3" height="1"/>
<rect x="1050" y="226" width="3" height="1"/>
<rect x="37" y="238" width="3" height="1"/>
<rect x="1050" y="238" width="3" height="1"/>
<rect x="37" y="250" width="3" height="1"/>
<rect x="1050" y="250" width="3" height="1"/>
<rect x="40" y="251" width="2" height="25"/>
<rect x="47" y="251" width="1" height="3"/>
<rect x="53" y="251" width="1" height="3"/>
<rect x="59" y="251" width="1" height="3"/>
<rect x="65" y="251" width="1" height="3"/>
<rect x="71" y="251" width="1" height="3"/>
<rect x="76" y="251" width="2" height="3"/>
<rect x="83" y="251" width="1" height="3"/>
<rect x="89" y="251" width="1" height="3"/>
<rect x="95" y="251" width="1" height="3"/>
<rect x="101" y="251" width="1" height="3"/>
<rect x="107" y="251" width="1" height="3"/>
<rect x="112" y="251" width="2" height="3"/>
<rect x="119" y="251" width="1" height="3"/>
<rect x="125" y="251" width="1" height="3"/>
<rect x="131" y="251" width="1" height="3"/>
<rect x="137" y="251" width="1" height="3"/>
<rect x="143" y="251" width="1" height="3"/>
<rect x="148" y="251" width="2" height="3"/>
<rect x="155" y="251" width="1" height="3"/>
<rect x="161" y="251" width="1" height="3"/>
<rect x="167" y="251" width="1" height="3"/>
<rect x="173" y="251" width="1" height="3"/>
<rect x="179" y="251" width="1" height="3"/>
<rect x="184" y="251" width="2" height="25"/>
<rect x="191" y="251" width="1" height="3"/>
<rect x="197" y="251" width="1" height="3"/>
<rect x="203" y="251" width="1" height="3"/>
<rect x="209" y="251" width="1" height="3"/>
<rect x="215" y="251" width="1" height="3"/>
<rect x="220" y="251" width="2" height="3"/>
<rect x="227" y="251" width="1" height="3"/>
<rect x="233" y="251" width="1" height="3"/>
<rect x="239" y="251" width="1" height="3"/>
<rect x="245" y="251" width="1" height="3"/>
<rect x="251" y="251" width="1" height="3"/>
<rect x="256" y="251" width="2" height="3"/>
<rect x="263" y="251" width="1" height="3"/>
<rect x="269" y="251" width="1" height="3"/>
<rect x="275" y="251" width="1" height="3"/>
<rect x="281" y="251" width="1" height="3"/>
<rect x="287" y="251" width="1" height="3"/>
<rect x="292" y="251" width="2" height="3"/>
<rect x="299" y="251" width="1" height="3"/>
<rect x="305" y="251" width="1" height="3"/>
<rect x="311" y="251" width="1" height="3"/>
<rect x="317" y="251" width="1" height="3"/>
<rect x="323" y="251" width="1" height="3"/>
<rect x="328" y="251" width="2" height="25"/>
<rect x="335" y="251" width="1" height="3"/>
<rect x="341" y="251" width="1" height="3"/>
<rect x="347" y="251" width="1" height="3"/>
<rect x="353" y="251" width="1" height="3"/>
<rect x="359" y="251" width="1" height="3"/>
<rect x="364" y="251" width="2" height="3"/>
<rect x="371" y="251" width="1" height="3"/>
<rect x="377" y="251" width="1" height="3"/>
<rect x="383" y="251" width="1" height="3"/>
<rect x="389" y="251" width="1" height="3"/>
<rect x="395" y="251" width="1" height="3"/>
<rect x="400" y="251" width="2" height="3"/>
<rect x="407" y="251" width="1" height="3"/>
<rect x="413" y="251" width="1" height="3"/>
<rect x="419" y="251" width="1" height="3"/>
<rect x="425" y="251" width="1" height="3"/>
<rect x="431" y="251" width="1" height="3"/>
<rect x="436" y="251" width="2" height="3"/>
<rect x="443" y="251" width="1" height="3"/>
<rect x="449" y="251" width="1" height="3"/>
<rect x="455" y="251" width="1" height="3"/>
<rect x="461" y="251" width="1" height="3"/>
<rect x="467" y="251" width="1" height="3"/>
<rect x="472" y="251" width="2" height="25"/>
<rect x="479" y="251" width="1" height="3"/>
<rect x="485" y="251" width="1" height="3"/>
<rect x="491" y="251" width="1" height="3"/>
<rect x="497" y="251" width="1" height="3"/>
<rect x="503" y="251" width="1" height="3"/>
<rect x="508" y="251" width="2" height="3"/>
<rect x="515" y="251" width="1" height="3"/>
<rect x="521" y="251" width="1" height="3"/>
<rect x="527" y="251" width="1" height="3"/>
<rect x="533" y="251" width="1" height="3"/>
<rect x="539" y="251" width="1" height="3"/>
<rect x="544" y="251" width="2" height="3"/>
<rect x="551" y="251" width="1" height="3"/>
<rect x="557" y="251" width="1" height="3"/>
<rect x="563" y="251" width="1" height="3"/>
<rect x="569" y="251" width="1" height="3"/>
<rect x="575" y="251" width="1" height="3"/>
<rect x="580" y="251" width="2" height="3"/>
<rect x="587" y="251" width="1" height="3"/>
<rect x="593" y="251" width="1" height="3"/>
<rect x="599" y="251" width="1" height="3"/>
<rect x="605" y="251" width="1" height="3"/>
<rect x="611" y="251" width="1" height="3"/>
<rect x="616" y="251" width="2" height="25"/>
<rect x="623" y="251" width="1" height="3"/>
<rect x="629" y="251" width="1" height="3"/>
<rect x="635" y="251" width="1" height="3"/>
<rect x="641" y="251" width="1" height="3"/>
<rect x="647" y="251" width="1" height="3"/>
<rect x="652" y="251" width="2" height="3"/>
<rect x="659" y="251" width="1" height="3"/>
<rect x="665" y="251" width="1" height="3"/>
<rect x="671" y="251" width="1" height="3"/>
<rect x="677" y="251" width="1" height="3"/>
<rect x="683" y="251" width="1" height="3"/>
<rect x="688" y="251" width="2" height="3"/>
<rect x="695" y="251" width="1" height="3"/>
<rect x="701" y="251" width="1" height="3"/>
<rect x="707" y="251" width="1" height="3"/>
<rect x="713" y="251" width="1" height="3"/>
<rect x="719" y="251" width="1" height="3"/>
<rect x="724" y="251" width="2" height="3"/>
<rect x="731" y="251" width="1" height="3"/>
<rect x="737" y="251" width="1" height="3"/>
<rect x="743" y="251" width="1" height="3"/>
<rect x="749" y="251" width="1" height="3"/>
<rect x="755" y="251" width="1" height="3"/>
<rect x="760" y="251" width="2" height="25"/>
<rect x="767" y="251" width="1" height="3"/>
<rect x="773" y="251" width="1" height="3"/>
<rect x="779" y="251" width="1" height="3"/>
<rect x="785" y="251" width="1" height="3"/>
<rect x="791" y="251" width="1" height="3"/>
<rect x="796" y="251" width="2" height="3"/>
<rect x="803" y="251" width="1" height="3"/>
<rect x="809" y="251" width="1" height="3"/>
<rect x="815" y="251" width="1" height="3"/>
<rect x="821" y="251" width="1" height="3"/>
<rect x="827" y="251" width="1" height="3"/>
<rect x="832" y="251" width="2" height="3"/>
<rect x="839" y="251" width="1" height="3"/>
<rect x="845" y="251" width="1" height="3"/>
<rect x="851" y="251" width="1" height="3"/>
<rect x="857" y="251" width="1" height="3"/>
<rect x="863" y="251" width="1" height="3"/>
<rect x="868" y="251" width="2" height="3"/>
<rect x="875" y="251" width="1" height="3"/>
<rect x="881" y="251" width="1" height="3"/>
<rect x="887" y="251" width="1" height="3"/>
<rect x="893" y="251" width="1" height="3"/>
<rect x="899" y="251" width="1" height="3"/>
<rect x="904" y="251" width="2" height="25"/>
<rect x="911" y="251" width="1" height="3"/>
<rect x="917" y="251" width="1" height="3"/>
<rect x="923" y="251" width="1" height="3"/>
<rect x="929" y="251" width="1" height="3"/>
<rect x="935" y="251" width="1" height="3"/>
<rect x="940" y="251" width="2" height="3"/>
<rect x="947" y="251" width="1" height="3"/>
<rect x="953" y="251" width="1" height="3"/>
<rect x="959" y="251" width="1" height="3"/>
<rect x="965" y="251" width="1" height="3"/>
<rect x="971" y="251" width="1" height="3"/>
<rect x="976" y="251" width="2" height="3"/>
<rect x="983" y="251" width="1" height="3"/>
<rect x="989" y="251" width="1" height="3"/>
<rect x="995" y="251" width="1" height="3"/>
<rect x="1001" y="251" width="1" height="3"/>
<rect x="1007" y="251" width="1" height="3"/>
<rect x="1012" y="251" width="2" height="3"/>
<rect x="1019" y="251" width="1" height="3"/>
<rect x="1025" y="251" width="1" height="3"/>
<rect x="1031" y="251" width="1" height="3"/>
<rect x="1037" y="251" width="1" height="3"/>
<rect x="1043" y="251" width="1" height="3"/>
<rect x="1048" y="251" width="2" height="25"/>
</g>
<g font-family='"Liberation Mono", monospace' fill="#fff">
<text x="32" y="136" font-size="11.8" fill="#fff" text-anchor="end" textLength="24" lengthAdjust="spacingAndGlyphs" >100%</text>
<text x="32" y="256" font-size="11.8" fill="#fff" text-anchor="end" textLength="12" lengthAdjust="spacingAndGlyphs" >0%</text>
<text x="1058" y="135" font-size="11.8" fill="#fff" text-anchor="start" textLength="30" lengthAdjust="spacingAndGlyphs" >42076</text>
<text x="1058" y="159" font-size="11.8" fill="#fff" text-anchor="start" textLength="30" lengthAdjust="spacingAndGlyphs" >33661</text>
<text x="1058" y="183" font-size="11.8" fill="#fff" text-anchor="start" textLength="30" lengthAdjust="spacingAndGlyphs" >25246</text>
<text x="1058" y="207" font-size="11.8" fill="#fff" text-anchor="start" textLength="30" lengthAdjust="spacingAndGlyphs" >16830</text>
<text x="1058" y="231" font-size="11.8" fill="#fff" text-anchor="start" textLength="24" lengthAdjust="spacingAndGlyphs" >8415</text>
<text x="1058" y="255" font-size="11.8" fill="#fff" text-anchor="start" textLength="6" lengthAdjust="spacingAndGlyphs" >0</text>
<text x="45" y="276" font-size="11.8" fill="#fff" text-anchor="start" textLength="43" lengthAdjust="spacingAndGlyphs" >17.Nov.</text>
<text x="77.5" y="263" font-size="8.2" fill="#fff" text-anchor="middle" font-weight="bold" textLength="4" lengthAdjust="spacingAndGlyphs" >6</text>
<text x="113.5" y="263" font-size="8.2" fill="#fff" text-anchor="middle" font-weight="bold" textLength="9" lengthAdjust="spacingAndGlyphs" >12</text>
<text x="149.5" y="263" font-size="8.2" fill="#fff" text-anchor="middle" font-weight="bold" textLength="9" lengthAdjust="spacingAndGlyphs" >18</text>
<text x="189" y="276" font-size="11.8" fill="#fff" text-anchor="start" textLength="43" lengthAdjust="spacingAndGlyphs" >18.Nov.</text>
<text x="221.5" y="263" font-size="8.2" fill="#fff" text-anchor="middle" font-weight="bold" textLength="4" lengthAdjust="spacingAndGlyphs" >6</text>
<text x="257.5" y="263" font-size="8.2" fill="#fff" text-anchor="middle" font-weight="bold" textLength="9" lengthAdjust="spacingAndGlyphs" >12</text>
<text x="293.5" y="263" font-size="8.2" fill="#fff" text-anchor="middle" font-weight="bold" textLength="9" lengthAdjust="spacingAndGlyphs" >18</text>
<text x="333" y="276" font-size="11.8" fill="#fff" text-anchor="start" textLength="43" lengthAdjust="spacingAndGlyphs" >19.Nov.</text>
<text x="365.5" y="263" font-size="8.2" fill="#fff" text-anchor="middle" font-weight="bold" textLength="4" lengthAdjust="spacingAndGlyphs" >6</text>
<text x="401.5" y="263" font-size="8.2" fill="#fff" text-anchor="middle" font-weight="bold" textLength="9" lengthAdjust="spacingAndGlyphs" >12</text>
<text x="437.5" y="263" font-size="8.2" fill="#fff" text-anchor="middle" font-weight="bold" textLength="9" lengthAdjust="spacingAndGlyphs" >18</text>
<text x="477" y="276" font-size="11.8" fill="#fff" text-anchor="start" textLength="43" lengthAdjust="spacingAndGlyphs" >20.Nov.</text>
<text x="509.5" y="263" font-size="8.2" fill="#fff" text-anchor="middle" font-weight="bold" textLength="4" lengthAdjust="spacingAndGlyphs" >6</text>
<text x="545.5" y="263" font-size="8.2" fill="#fff" text-anchor="middle" font-weight="bold" textLength="9" lengthAdjust="spacingAndGlyphs" >12</text>
<text x="581.5" y="263" font-size="8.2" fill="#fff" text-anchor="middle" font-weight="bold" textLength="9" lengthAdjust="spacingAndGlyphs" >18</text>
<text x="621" y="276" font-size="11.8" fill="#fff" text-anchor="start" textLength="43" lengthAdjust="spacingAndGlyphs" >21.Nov.</text>
<text x="653.5" y="263" font-size="8.2" fill="#fff" text-anchor="middle" font-weight="bold" textLength="4" lengthAdjust="spacingAndGlyphs" >6</text>
<text x="689.5" y="263" font-size="8.2" fill="#fff" text-anchor="middle" font-weight="bold" textLength="9" lengthAdjust="spacingAndGlyphs" >12</text>
<text x="725.5" y="263" font-size="8.2" fill="#fff" text-anchor="middle" font-weight="bold" textLength="9" lengthAdjust="spacingAndGlyphs" >18</text>
<text x="765" y="276" font-size="11.8" fill="#fff" text-anchor="start" textLength="43" lengthAdjust="spacingAndGlyphs" >22.Nov.</text>
<text x="797.5" y="263" font-size="8.2" fill="#fff" text-anchor="middle" font-weight="bold" textLength="4" lengthAdjust="spacingAndGlyphs" >6</text>
<text x="833.5" y="263" font-size="8.2" fill="#fff" text-anchor="middle" font-weight="bold" textLength="9" lengthAdjust="spacingAndGlyphs" >12</text>
<text x="869.5" y="263" font-size="8.2" fill="#fff" text-anchor="middle" font-weight="bold" textLength="9" lengthAdjust="spacingAndGlyphs" >18</text>
<text x="909" y="276" font-size="11.8" fill="#fff" text-anchor="start" textLength="43" lengthAdjust="spacingAndGlyphs" >23.Nov.</text>
<text x="941.5" y="263" font-size="8.2" fill="#fff" text-anchor="middle" font-weight="bold" textLength="4" lengthAdjust="spacingAndGlyphs" >6</text>
<text x="977.5" y="263" font-size="8.2" fill="#fff" text-anchor="middle" font-weight="bold" textLength="9" lengthAdjust="spacingAndGlyphs" >12</text>
<text x="1013.5" y="263" font-size="8.2" fill="#fff" text-anchor="middle" font-weight="bold" textLength="9" lengthAdjust="spacingAndGlyphs" >18</text>
</g>
</g>
<g transform="translate(0,320)">
<rect x="41" y="130" width="1008" height="120" fill="#808080"/>
<g fill="#ff0000" shape-rendering="crispEdges"><rect x="711" y="130" width="1" height="120"/><rect x="713" y="130" width="1" height="120"/><rect x="716" y="130" width="1" height="120"/><rect x="730" y="130" width="1" height="120"/><rect x="734" y="130" width="1" height="120"/><rect x="770" y="130" width="1" height="120"/><rect x="771" y="130" width="1" height="120"/><rect x="773" y="130" width="1" height="120"/><rect x="784" y="130" width="1" height="120"/><rect x="789" y="130" width="1" height="120"/><rect x="799" y="130" width="1" height="120"/><rect x="810" y="130" width="1" height="120"/><rect x="817" y="130" width="1" height="120"/><rect x="819" y="130" width="1" height="120"/><rect x="823" y="130" width="1" height="120"/><rect x="826" y="130" width="1" height="120"/><rect x="832" y="130" width="1" height="120"/><rect x="897" y="130" width="1" height="120"/><rect x="900" y="130" width="1" height="120"/><rect x="902" y="130" width="1" height="120"/><rect x="905" y="130" width="1" height="120"/><rect x="925" y="130" width="1" height="120"/><rect x="927" y="130" width="1" height="120"/><rect x="928" y="130" width="1" height="120"/><rect x="934" y="130" width="1" height="120"/><rect x="936" y="130" width="1" height="120"/><rect x="938" y="130" width="1" height="120"/><rect x="946" y="130" width="1" height="120"/><rect x="950" y="130" width="1" height="120"/><rect x="953" y="130" width="1" height="120"/><rect x="965" y="130" width="1" height="120"/><rect x="967" y="130" width="1" height="120"/><rect x="990" y="130" width="1" height="120"/><rect x="1003" y="130" width="1" height="120"/><rect x="1015" y="130" width="1" height="120"/><rect x="1020" y="130" width="1" height="120"/><rect x="1028" y="130" width="1" height="120"/><rect x="1043" y="130" width="1" height="120"/></g><polyline points="41.8,238.8 53.8,239.9 67.6,238.8 81.4,238.3 95.2,239.9 109.0,239.2 120.5,236.5 132.1,239.2 141.3,240.6 155.1,235.3 168.9,233.7 178.1,236.9 187.3,238.8 201.1,239.9 224.1,240.4 247.1,240.4 260.9,239.9 270.1,240.6 283.9,238.8 292.0,238.8 292.0,238.8 303.5,237.6 317.3,237.6 333.4,242.2 347.2,239.2 361.0,241.1 370.2,240.6 388.7,243.4 397.9,243.4 411.7,237.6 420.9,239.2 434.7,237.6 453.1,234.2 466.9,233.0 476.1,234.2 485.3,236.9 499.1,236.0 512.9,233.7 522.1,236.9 533.6,236.5 544.0,234.6 544.0,234.2 553.2,233.0 562.4,236.0 571.6,239.2 580.8,235.3 590.0,233.0 599.2,235.3 608.4,236.5 615.3,238.3 622.2,233.0 631.5,236.0 640.7,237.6 654.5,235.3 663.7,236.5 672.9,237.6 682.1,237.6 689.0,232.3 693.6,230.7 702.8,235.3 708.5,237.6 714.3,213.5 720.1,158.2 728.1,153.6 732.7,160.5 737.3,157.1 746.5,151.8 758.0,141.6 771.8,141.0 776.4,140.3 783.3,151.3 789.1,151.8 796.0,145.6 796.0,143.3 801.8,149.0 809.8,147.9 814.4,147.2 817.9,152.5 823.6,152.5 825.9,153.6 837.4,158.2 844.3,149.0 851.2,146.3 858.1,147.2 862.7,155.9 874.2,136.4 880.0,141.6 891.5,128.8 897.3,137.5 901.9,149.0 906.5,154.8 913.4,147.9 920.3,151.3 929.5,147.9 938.7,159.4 945.6,155.5 950.2,155.9 954.8,160.5 957.1,153.6 966.3,150.2 970.9,147.9 982.4,149.0 989.3,155.9 998.5,153.6 1005.4,162.8 1012.3,162.8 1016.9,157.1 1026.1,147.9 1030.7,152.5 1037.6,160.5 1044.5,152.5 1048.0,151.3" fill="none" stroke="#ffffff" stroke-width="2" stroke-linejoin="miter" shape-rendering="crispEdges"/>
<polyline points="41.8,161.7 49.2,164.0 58.4,162.8 67.6,162.4 76.8,161.7 83.7,161.0 90.6,165.1 99.8,169.7 113.6,167.4 120.5,173.2 132.1,177.8 141.3,174.3 148.2,165.1 156.2,157.8 162.0,175.5 170.0,180.8 175.8,169.7 181.5,167.9 187.3,181.2 193.0,182.4 201.1,167.4 210.3,166.3 220.7,155.9 231.0,155.9 235.6,159.4 242.5,160.5 244.8,153.2 252.9,151.8 259.8,160.5 263.2,188.1 271.3,187.0 277.0,162.8 283.9,158.2 292.0,165.1 292.0,165.1 296.6,170.9 304.7,181.2 310.4,183.5 317.3,172.0 326.5,175.5 332.3,183.5 342.6,190.9 351.8,183.5 361.0,182.4 370.2,176.6 379.5,169.7 386.4,172.0 393.3,172.0 395.6,167.9 401.3,180.1 408.2,182.4 416.3,172.0 420.9,170.2 427.8,173.2 439.3,188.1 448.5,190.4 462.3,195.0 473.8,196.2 483.0,188.1 494.5,175.5 496.8,173.9 504.9,182.4 510.6,181.2 521.0,167.0 526.7,175.5 533.6,177.8 539.4,178.5 544.0,182.4 544.0,182.4 547.5,183.5 553.2,177.8 560.1,174.3 565.9,176.2 573.9,169.7 580.8,170.2 590.0,173.2 599.2,171.6 608.4,170.9 619.9,172.0 628.0,173.9 636.1,166.3 645.3,161.7 656.8,160.5 666.0,160.1 672.9,166.3 682.1,167.4 685.5,174.8 693.6,172.0 700.5,161.7 707.4,162.4 710.8,166.3 718.9,159.4 722.4,160.5 730.4,167.4 739.6,166.3 751.1,173.9 762.6,175.5 774.1,168.6 783.3,167.4 796.0,166.3 796.0,166.3 802.9,162.8 812.1,155.9 819.0,154.8 825.9,153.6 836.3,158.2 839.7,159.4 846.6,169.7 858.1,162.8 871.9,174.3 885.8,173.9 890.4,170.9 898.4,173.2 908.8,165.6 920.3,164.0 929.5,165.1 938.7,162.8 952.5,154.1 957.1,154.8 968.6,164.0 982.4,169.7 993.9,164.0 1000.8,169.3 1012.3,157.8 1016.9,158.7 1028.4,160.1 1039.9,167.9 1048.0,172.0" fill="none" stroke="#ffb000" stroke-width="2" stroke-linejoin="miter" shape-rendering="crispEdges"/>
<polyline points="41.8,244.5 44.6,249.0 67.6,249.0 79.1,245.7 92.9,238.3 104.4,236.9 118.2,234.2 129.8,238.3 139.0,244.5 145.9,249.0 178.1,249.0 205.7,246.8 224.1,245.2 242.5,245.7 263.2,242.2 279.3,243.4 288.5,242.2 292.0,238.8 292.0,238.8 305.8,232.3 312.7,223.8 321.9,219.2 331.1,207.7 338.0,206.5 344.9,199.6 349.5,208.8 356.4,212.3 367.9,212.3 379.5,212.3 388.7,201.9 394.4,185.8 399.0,188.1 404.8,210.0 415.1,210.0 422.0,221.5 432.4,210.0 442.7,220.4 448.5,215.8 462.3,219.2 466.9,216.9 476.1,218.1 480.7,221.5 487.6,229.6 494.5,236.0 510.6,236.5 522.1,236.0 531.3,233.0 544.0,229.6 544.0,229.6 553.2,220.4 564.7,208.8 570.5,212.3 575.1,225.0 580.8,227.3 587.7,232.3 599.2,231.9 603.8,233.7 613.0,227.3 617.6,229.1 622.2,234.6 636.1,235.3 645.3,234.2 654.5,238.8 663.7,236.5 677.5,234.2 686.7,238.3 695.9,237.6 708.5,236.0 713.2,246.8 718.9,249.0 796.0,249.0 796.0,249.0 1048.0,249.0" fill="none" stroke="#00ff00" stroke-width="2" stroke-linejoin="miter" shape-rendering="crispEdges"/>
<polyline points="41.8,248.0 67.6,248.0 74.5,236.5 81.4,220.4 84.9,206.5 95.2,210.0 98.7,222.7 106.7,223.8 111.3,219.2 118.2,221.5 127.5,223.8 130.9,219.2 137.8,216.9 140.1,225.0 142.4,246.8 157.4,248.0 159.7,236.0 170.0,233.0 173.5,238.8 180.4,244.5 189.6,245.2 195.3,239.9 201.1,233.0 205.7,241.1 212.6,245.7 217.2,236.5 226.4,233.0 233.3,225.0 236.8,220.4 242.5,231.9 248.3,241.1 254.0,233.0 263.2,234.2 270.1,228.4 272.4,220.4 279.3,222.7 288.5,220.4 292.0,226.1 292.0,228.4 298.9,225.4 305.8,220.4 315.0,219.2 324.2,215.8 333.4,220.4 340.3,227.3 349.5,234.2 358.7,235.3 365.6,229.6 374.8,222.7 379.5,228.4 388.7,229.6 397.9,236.0 407.1,232.3 416.3,229.6 425.5,229.1 434.7,227.3 448.5,225.4 457.7,222.7 466.9,222.7 476.1,220.4 483.0,222.2 487.6,227.3 499.1,224.5 512.9,224.5 524.4,234.2 533.6,230.7 544.0,227.3 544.0,230.7 553.2,230.7 564.7,227.3 573.9,234.2 585.4,240.6 599.2,242.9 610.7,243.4 622.2,235.3 631.5,238.8 640.7,246.8 654.5,245.7 668.3,246.8 682.1,245.7 705.1,247.5 728.1,248.0 737.3,245.7 746.5,246.8 751.1,250.0 785.6,250.0 787.9,245.7 796.0,245.7 796.0,245.7 799.5,248.0 869.6,248.0 871.9,246.1 881.2,246.1 883.5,250.0 989.3,248.0 998.5,245.7 1003.1,242.2 1012.3,238.8 1020.4,238.3 1030.7,239.9 1037.6,243.4 1039.9,250.0 1043.4,250.0 1045.7,242.9 1048.0,239.9" fill="none" stroke="#0080ff" stroke-width="2" stroke-linejoin="miter" shape-rendering="crispEdges"/>
<g fill="#fff" shape-rendering="crispEdges">
<rect x="40" y="130" width="1" height="121"/>
<rect x="1049" y="130" width="1" height="121"/>
<rect x="37" y="250" width="1016" height="1"/>
<rect x="37" y="130" width="3" height="1"/>
<rect x="1050" y="130" width="3" height="1"/>
<rect x="37" y="142" width="3" height="1"/>
<rect x="1050" y="142" width="3" height="1"/>
<rect x="37" y="154" width="3" height="1"/>
<rect x="1050" y="154" width="3" height="1"/>
<rect x="37" y="166" width="3" height="1"/>
<rect x="1050" y="166" width="3" height="1"/>
<rect x="37" y="178" width="3" height="1"/>
<rect x="1050" y="178" width="3" height="1"/>
<rect x="37" y="190" width="3" height="1"/>
<rect x="1050" y="190" width="3" height="1"/>
<rect x="37" y="202" width="3" height="1"/>
<rect x="1050" y="202" width="3" height="1"/>
<rect x="37" y="214" width="3" height="1"/>
<rect x="1050" y="214" width="3" height="1"/>
<rect x="37" y="226" width="3" height="1"/>
<rect x="1050" y="226" width="3" height="1"/>
<rect x="37" y="238" width="3" height="1"/>
<rect x="1050" y="238" width="3" height="1"/>
<rect x="37" y="250" width="3" height="1"/>
<rect x="1050" y="250" width="3" height="1"/>
<rect x="40" y="251" width="2" height="25"/>
<rect x="47" y="251" width="1" height="3"/>
<rect x="53" y="251" width="1" height="3"/>
<rect x="59" y="251" width="1" height="3"/>
<rect x="65" y="251" width="1" height="3"/>
<rect x="71" y="251" width="1" height="3"/>
<rect x="76" y="251" width="2" height="3"/>
<rect x="83" y="251" width="1" height="3"/>
<rect x="89" y="251" width="1" height="3"/>
<rect x="95" y="251" width="1" height="3"/>
<rect x="101" y="251" width="1" height="3"/>
<rect x="107" y="251" width="1" height="3"/>
<rect x="112" y="251" width="2" height="3"/>
<rect x="119" y="251" width="1" height="3"/>
<rect x="125" y="251" width="1" height="3"/>
<rect x="131" y="251" width="1" height="3"/>
<rect x="137" y="251" width="1" height="3"/>
<rect x="143" y="251" width="1" height="3"/>
<rect x="148" y="251" width="2" height="3"/>
<rect x="155" y="251" width="1" height="3"/>
<rect x="161" y="251" width="1" height="3"/>
<rect x="167" y="251" width="1" height="3"/>
<rect x="173" y="251" width="1" height="3"/>
<rect x="179" y="251" width="1" height="3"/>
<rect x="184" y="251" width="2" height="25"/>
<rect x="191" y="251" width="1" height="3"/>
<rect x="197" y="251" width="1" height="3"/>
<rect x="203" y="251" width="1" height="3"/>
<rect x="209" y="251" width="1" height="3"/>
<rect x="215" y="251" width="1" height="3"/>
<rect x="220" y="251" width="2" height="3"/>
<rect x="227" y="251" width="1" height="3"/>
<rect x="233" y="251" width="1" height="3"/>
<rect x="239" y="251" width="1" height="3"/>
<rect x="245" y="251" width="1" height="3"/>
<rect x="251" y="251" width="1" height="3"/>
<rect x="256" y="251" width="2" height="3"/>
<rect x="263" y="251" width="1" height="3"/>
<rect x="269" y="251" width="1" height="3"/>
<rect x="275" y="251" width="1" height="3"/>
<rect x="281" y="251" width="1" height="3"/>
<rect x="287" y="251" width="1" height="3"/>
<rect x="292" y="251" width="2" height="3"/>
<rect x="299" y="251" width="1" height="3"/>
<rect x="305" y="251" width="1" height="3"/>
<rect x="311" y="251" width="1" height="3"/>
<rect x="317" y="251" width="1" height="3"/>
<rect x="323" y="251" width="1" height="3"/>
<rect x="328" y="251" width="2" height="25"/>
<rect x="335" y="251" width="1" height="3"/>
<rect x="341" y="251" width="1" height="3"/>
<rect x="347" y="251" width="1" height="3"/>
<rect x="353" y="251" width="1" height="3"/>
<rect x="359" y="251" width="1" height="3"/>
<rect x="364" y="251" width="2" height="3"/>
<rect x="371" y="251" width="1" height="3"/>
<rect x="377" y="251" width="1" height="3"/>
<rect x="383" y="251" width="1" height="3"/>
<rect x="389" y="251" width="1" height="3"/>
<rect x="395" y="251" width="1" height="3"/>
<rect x="400" y="251" width="2" height="3"/>
<rect x="407" y="251" width="1" height="3"/>
<rect x="413" y="251" width="1" height="3"/>
<rect x="419" y="251" width="1" height="3"/>
<rect x="425" y="251" width="1" height="3"/>
<rect x="431" y="251" width="1" height="3"/>
<rect x="436" y="251" width="2" height="3"/>
<rect x="443" y="251" width="1" height="3"/>
<rect x="449" y="251" width="1" height="3"/>
<rect x="455" y="251" width="1" height="3"/>
<rect x="461" y="251" width="1" height="3"/>
<rect x="467" y="251" width="1" height="3"/>
<rect x="472" y="251" width="2" height="25"/>
<rect x="479" y="251" width="1" height="3"/>
<rect x="485" y="251" width="1" height="3"/>
<rect x="491" y="251" width="1" height="3"/>
<rect x="497" y="251" width="1" height="3"/>
<rect x="503" y="251" width="1" height="3"/>
<rect x="508" y="251" width="2" height="3"/>
<rect x="515" y="251" width="1" height="3"/>
<rect x="521" y="251" width="1" height="3"/>
<rect x="527" y="251" width="1" height="3"/>
<rect x="533" y="251" width="1" height="3"/>
<rect x="539" y="251" width="1" height="3"/>
<rect x="544" y="251" width="2" height="3"/>
<rect x="551" y="251" width="1" height="3"/>
<rect x="557" y="251" width="1" height="3"/>
<rect x="563" y="251" width="1" height="3"/>
<rect x="569" y="251" width="1" height="3"/>
<rect x="575" y="251" width="1" height="3"/>
<rect x="580" y="251" width="2" height="3"/>
<rect x="587" y="251" width="1" height="3"/>
<rect x="593" y="251" width="1" height="3"/>
<rect x="599" y="251" width="1" height="3"/>
<rect x="605" y="251" width="1" height="3"/>
<rect x="611" y="251" width="1" height="3"/>
<rect x="616" y="251" width="2" height="25"/>
<rect x="623" y="251" width="1" height="3"/>
<rect x="629" y="251" width="1" height="3"/>
<rect x="635" y="251" width="1" height="3"/>
<rect x="641" y="251" width="1" height="3"/>
<rect x="647" y="251" width="1" height="3"/>
<rect x="652" y="251" width="2" height="3"/>
<rect x="659" y="251" width="1" height="3"/>
<rect x="665" y="251" width="1" height="3"/>
<rect x="671" y="251" width="1" height="3"/>
<rect x="677" y="251" width="1" height="3"/>
<rect x="683" y="251" width="1" height="3"/>
<rect x="688" y="251" width="2" height="3"/>
<rect x="695" y="251" width="1" height="3"/>
<rect x="701" y="251" width="1" height="3"/>
<rect x="707" y="251" width="1" height="3"/>
<rect x="713" y="251" width="1" height="3"/>
<rect x="719" y="251" width="1" height="3"/>
<rect x="724" y="251" width="2" height="3"/>
<rect x="731" y="251" width="1" height="3"/>
<rect x="737" y="251" width="1" height="3"/>
<rect x="743" y="251" width="1" height="3"/>
<rect x="749" y="251" width="1" height="3"/>
<rect x="755" y="251" width="1" height="3"/>
<rect x="760" y="251" width="2" height="25"/>
<rect x="767" y="251" width="1" height="3"/>
<rect x="773" y="251" width="1" height="3"/>
<rect x="779" y="251" width="1" height="3"/>
<rect x="785" y="251" width="1" height="3"/>
<rect x="791" y="251" width="1" height="3"/>
<rect x="796" y="251" width="2" height="3"/>
<rect x="803" y="251" width="1" height="3"/>
<rect x="809" y="251" width="1" height="3"/>
<rect x="815" y="251" width="1" height="3"/>
<rect x="821" y="251" width="1" height="3"/>
<rect x="827" y="251" width="1" height="3"/>
<rect x="832" y="251" width="2" height="3"/>
<rect x="839" y="251" width="1" height="3"/>
<rect x="845" y="251" width="1" height="3"/>
<rect x="851" y="251" width="1" height="3"/>
<rect x="857" y="251" width="1" height="3"/>
<rect x="863" y="251" width="1" height="3"/>
<rect x="868" y="251" width="2" height="3"/>
<rect x="875" y="251" width="1" height="3"/>
<rect x="881" y="251" width="1" height="3"/>
<rect x="887" y="251" width="1" height="3"/>
<rect x="893" y="251" width="1" height="3"/>
<rect x="899" y="251" width="1" height="3"/>
<rect x="904" y="251" width="2" height="25"/>
<rect x="911" y="251" width="1" height="3"/>
<rect x="917" y="251" width="1" height="3"/>
<rect x="923" y="251" width="1" height="3"/>
<rect x="929" y="251" width="1" height="3"/>
<rect x="935" y="251" width="1" height="3"/>
<rect x="940" y="251" width="2" height="3"/>
<rect x="947" y="251" width="1" height="3"/>
<rect x="953" y="251" width="1" height="3"/>
<rect x="959" y="251" width="1" height="3"/>
<rect x="965" y="251" width="1" height="3"/>
<rect x="971" y="251" width="1" height="3"/>
<rect x="976" y="251" width="2" height="3"/>
<rect x="983" y="251" width="1" height="3"/>
<rect x="989" y="251" width="1" height="3"/>
<rect x="995" y="251" width="1" height="3"/>
<rect x="1001" y="251" width="1" height="3"/>
<rect x="1007" y="251" width="1" height="3"/>
<rect x="1012" y="251" width="2" height="3"/>
<rect x="1019" y="251" width="1" height="3"/>
<rect x="1025" y="251" width="1" height="3"/>
<rect x="1031" y="251" width="1" height="3"/>
<rect x="1037" y="251" width="1" height="3"/>
<rect x="1043" y="251" width="1" height="3"/>
<rect x="1048" y="251" width="2" height="25"/>
</g>
<g font-family='"Liberation Mono", monospace' fill="#fff">
<text x="32" y="136" font-size="11.8" fill="#fff" text-anchor="end" textLength="24" lengthAdjust="spacingAndGlyphs" >100%</text>
<text x="32" y="256" font-size="11.8" fill="#fff" text-anchor="end" textLength="12" lengthAdjust="spacingAndGlyphs" >0%</text>
<text x="1058" y="135" font-size="11.8" fill="#fff" text-anchor="start" textLength="30" lengthAdjust="spacingAndGlyphs" >42076</text>
<text x="1058" y="159" font-size="11.8" fill="#fff" text-anchor="start" textLength="30" lengthAdjust="spacingAndGlyphs" >33661</text>
<text x="1058" y="183" font-size="11.8" fill="#fff" text-anchor="start" textLength="30" lengthAdjust="spacingAndGlyphs" >25246</text>
<text x="1058" y="207" font-size="11.8" fill="#fff" text-anchor="start" textLength="30" lengthAdjust="spacingAndGlyphs" >16830</text>
<text x="1058" y="231" font-size="11.8" fill="#fff" text-anchor="start" textLength="24" lengthAdjust="spacingAndGlyphs" >8415</text>
<text x="1058" y="255" font-size="11.8" fill="#fff" text-anchor="start" textLength="6" lengthAdjust="spacingAndGlyphs" >0</text>
<text x="45" y="276" font-size="11.8" fill="#fff" text-anchor="start" textLength="43" lengthAdjust="spacingAndGlyphs" >24.Nov.</text>
<text x="77.5" y="263" font-size="8.2" fill="#fff" text-anchor="middle" font-weight="bold" textLength="4" lengthAdjust="spacingAndGlyphs" >6</text>
<text x="113.5" y="263" font-size="8.2" fill="#fff" text-anchor="middle" font-weight="bold" textLength="9" lengthAdjust="spacingAndGlyphs" >12</text>
<text x="149.5" y="263" font-size="8.2" fill="#fff" text-anchor="middle" font-weight="bold" textLength="9" lengthAdjust="spacingAndGlyphs" >18</text>
<text x="189" y="276" font-size="11.8" fill="#fff" text-anchor="start" textLength="43" lengthAdjust="spacingAndGlyphs" >25.Nov.</text>
<text x="221.5" y="263" font-size="8.2" fill="#fff" text-anchor="middle" font-weight="bold" textLength="4" lengthAdjust="spacingAndGlyphs" >6</text>
<text x="257.5" y="263" font-size="8.2" fill="#fff" text-anchor="middle" font-weight="bold" textLength="9" lengthAdjust="spacingAndGlyphs" >12</text>
<text x="293.5" y="263" font-size="8.2" fill="#fff" text-anchor="middle" font-weight="bold" textLength="9" lengthAdjust="spacingAndGlyphs" >18</text>
<text x="333" y="276" font-size="11.8" fill="#fff" text-anchor="start" textLength="43" lengthAdjust="spacingAndGlyphs" >26.Nov.</text>
<text x="365.5" y="263" font-size="8.2" fill="#fff" text-anchor="middle" font-weight="bold" textLength="4" lengthAdjust="spacingAndGlyphs" >6</text>
<text x="401.5" y="263" font-size="8.2" fill="#fff" text-anchor="middle" font-weight="bold" textLength="9" lengthAdjust="spacingAndGlyphs" >12</text>
<text x="437.5" y="263" font-size="8.2" fill="#fff" text-anchor="middle" font-weight="bold" textLength="9" lengthAdjust="spacingAndGlyphs" >18</text>
<text x="477" y="276" font-size="11.8" fill="#fff" text-anchor="start" textLength="43" lengthAdjust="spacingAndGlyphs" >27.Nov.</text>
<text x="509.5" y="263" font-size="8.2" fill="#fff" text-anchor="middle" font-weight="bold" textLength="4" lengthAdjust="spacingAndGlyphs" >6</text>
<text x="545.5" y="263" font-size="8.2" fill="#fff" text-anchor="middle" font-weight="bold" textLength="9" lengthAdjust="spacingAndGlyphs" >12</text>
<text x="581.5" y="263" font-size="8.2" fill="#fff" text-anchor="middle" font-weight="bold" textLength="9" lengthAdjust="spacingAndGlyphs" >18</text>
<text x="621" y="276" font-size="11.8" fill="#fff" text-anchor="start" textLength="43" lengthAdjust="spacingAndGlyphs" >28.Nov.</text>
<text x="653.5" y="263" font-size="8.2" fill="#fff" text-anchor="middle" font-weight="bold" textLength="4" lengthAdjust="spacingAndGlyphs" >6</text>
<text x="689.5" y="263" font-size="8.2" fill="#fff" text-anchor="middle" font-weight="bold" textLength="9" lengthAdjust="spacingAndGlyphs" >12</text>
<text x="725.5" y="263" font-size="8.2" fill="#fff" text-anchor="middle" font-weight="bold" textLength="9" lengthAdjust="spacingAndGlyphs" >18</text>
<text x="765" y="276" font-size="11.8" fill="#fff" text-anchor="start" textLength="43" lengthAdjust="spacingAndGlyphs" >29.Nov.</text>
<text x="797.5" y="263" font-size="8.2" fill="#fff" text-anchor="middle" font-weight="bold" textLength="4" lengthAdjust="spacingAndGlyphs" >6</text>
<text x="833.5" y="263" font-size="8.2" fill="#fff" text-anchor="middle" font-weight="bold" textLength="9" lengthAdjust="spacingAndGlyphs" >12</text>
<text x="869.5" y="263" font-size="8.2" fill="#fff" text-anchor="middle" font-weight="bold" textLength="9" lengthAdjust="spacingAndGlyphs" >18</text>
<text x="909" y="276" font-size="11.8" fill="#fff" text-anchor="start" textLength="43" lengthAdjust="spacingAndGlyphs" >30.Nov.</text>
<text x="941.5" y="263" font-size="8.2" fill="#fff" text-anchor="middle" font-weight="bold" textLength="4" lengthAdjust="spacingAndGlyphs" >6</text>
<text x="977.5" y="263" font-size="8.2" fill="#fff" text-anchor="middle" font-weight="bold" textLength="9" lengthAdjust="spacingAndGlyphs" >12</text>
<text x="1013.5" y="263" font-size="8.2" fill="#fff" text-anchor="middle" font-weight="bold" textLength="9" lengthAdjust="spacingAndGlyphs" >18</text>
</g>
</g>
<g transform="translate(0,480)">
<rect x="41" y="130" width="126" height="120" fill="#808080"/><rect x="167" y="130" width="56" height="120" fill="#282828"/><rect x="223" y="130" width="1" height="120" fill="#40b040"/><rect x="224" y="130" width="743" height="120" fill="#808080"/>
<g fill="#ff0000" shape-rendering="crispEdges"><rect x="66" y="130" width="1" height="120"/><rect x="73" y="130" width="1" height="120"/><rect x="75" y="130" width="1" height="120"/><rect x="78" y="130" width="1" height="120"/><rect x="80" y="130" width="1" height="120"/><rect x="153" y="130" width="1" height="120"/><rect x="240" y="130" width="1" height="120"/><rect x="268" y="130" width="1" height="120"/><rect x="279" y="130" width="1" height="120"/><rect x="288" y="130" width="1" height="120"/><rect x="305" y="130" width="1" height="120"/><rect x="307" y="130" width="1" height="120"/><rect x="320" y="130" width="1" height="120"/><rect x="337" y="130" width="1" height="120"/><rect x="349" y="130" width="1" height="120"/><rect x="398" y="130" width="1" height="120"/><rect x="401" y="130" width="1" height="120"/><rect x="427" y="130" width="1" height="120"/><rect x="429" y="130" width="1" height="120"/><rect x="435" y="130" width="1" height="120"/><rect x="440" y="130" width="1" height="120"/><rect x="453" y="130" width="1" height="120"/><rect x="506" y="130" width="1" height="120"/><rect x="519" y="130" width="1" height="120"/><rect x="521" y="130" width="1" height="120"/><rect x="529" y="130" width="1" height="120"/><rect x="530" y="130" width="1" height="120"/><rect x="544" y="130" width="1" height="120"/><rect x="547" y="130" width="1" height="120"/><rect x="550" y="130" width="1" height="120"/><rect x="555" y="130" width="1" height="120"/><rect x="571" y="130" width="1" height="120"/><rect x="581" y="130" width="1" height="120"/><rect x="593" y="130" width="1" height="120"/><rect x="615" y="130" width="1" height="120"/><rect x="679" y="130" width="1" height="120"/><rect x="690" y="130" width="1" height="120"/><rect x="692" y="130" width="1" height="120"/><rect x="704" y="130" width="1" height="120"/><rect x="705" y="130" width="1" height="120"/><rect x="712" y="130" width="1" height="120"/><rect x="714" y="130" width="1" height="120"/><rect x="729" y="130" width="1" height="120"/><rect x="731" y="130" width="1" height="120"/><rect x="742" y="130" width="1" height="120"/><rect x="793" y="130" width="1" height="120"/><rect x="795" y="130" width="1" height="120"/><rect x="802" y="130" width="1" height="120"/><rect x="813" y="130" width="1" height="120"/><rect x="814" y="130" width="1" height="120"/><rect x="818" y="130" width="1" height="120"/><rect x="821" y="130" width="1" height="120"/><rect x="866" y="130" width="1" height="120"/><rect x="869" y="130" width="1" height="120"/><rect x="870" y="130" width="1" height="120"/><rect x="885" y="130" width="1" height="120"/></g><polyline points="41.8,151.3 46.9,153.6 53.8,151.3 63.0,146.7 69.9,147.9 76.8,152.5 81.4,160.1 88.3,155.9 95.2,144.0 99.8,146.7 104.4,153.6 111.3,158.7 118.2,154.8 122.8,149.0 129.8,146.7 136.7,152.5 145.9,152.5 155.1,158.2 162.0,152.5 167.0,154.1 189.6,154.1" fill="none" stroke="#ffffff" stroke-width="2" stroke-linejoin="miter" shape-rendering="crispEdges"/>
<polyline points="223.0,172.0 223.0,154.8 228.7,145.6 237.9,142.1 241.4,147.9 251.7,149.0 260.9,150.2 270.1,147.9 279.3,155.9 288.5,157.1 292.0,155.9 292.0,151.3 295.5,149.0 301.2,154.8 307.0,162.8 315.0,158.2 321.9,150.2 326.5,155.9 333.4,153.6 341.5,153.6 347.2,160.5 353.0,161.7 358.7,190.4 364.5,229.6 371.4,221.5 379.5,231.9 386.4,199.6 392.1,155.9 396.7,162.8 404.8,172.0 414.0,157.1 423.2,154.8 432.4,150.2 441.6,162.4 448.5,165.1 457.7,160.1 463.5,160.1 466.9,153.6 470.4,162.8 476.1,192.7 480.7,227.3 487.6,236.5 494.5,235.3 506.0,236.5 512.9,185.8 517.5,162.8 522.1,166.3 531.3,161.7 544.0,157.1 544.0,160.5 549.8,167.4 559.0,154.8 567.0,154.1 577.4,154.8 582.0,158.2 586.6,154.8 590.0,161.7 594.6,160.5 600.4,173.2 606.1,166.3 610.7,154.8 617.6,157.1 623.4,149.5 631.5,154.8 638.4,165.1 649.9,231.9 656.8,228.4 663.7,229.6 669.4,236.5 674.0,237.6 679.8,201.9 685.5,161.7 693.6,155.9 702.8,149.0 708.5,144.0 714.3,158.2 718.9,164.7 728.1,155.9 732.7,159.4 740.8,164.0 746.5,157.1 751.1,155.9 756.9,160.5 769.5,236.5 776.4,236.5 785.6,236.5 796.0,174.3 796.0,174.3 798.3,158.2 802.9,155.5 807.5,157.1 812.1,160.5 816.7,154.8 823.6,154.1 825.9,162.8 830.5,169.7 834.0,168.6 836.3,180.1 840.9,164.0 844.3,169.7 850.1,155.9 855.8,162.8 862.7,165.6 867.3,160.5 874.2,164.0 878.8,167.4 885.8,162.8 892.7,160.1 899.6,155.5 904.2,155.9 907.6,149.5 911.1,154.8 920.3,236.5 929.5,237.6 943.3,236.0 950.2,236.5 961.7,159.4 967.0,160.5" fill="none" stroke="#ffffff" stroke-width="2" stroke-linejoin="miter" shape-rendering="crispEdges"/>
<polyline points="41.8,172.0 51.5,170.9 58.4,170.9 67.6,168.6 81.4,167.0 90.6,157.8 99.8,166.3 109.0,174.3 115.9,169.7 129.8,166.3 136.7,169.7 141.3,176.6 152.8,169.7 162.0,173.2 167.0,170.9 189.6,170.9" fill="none" stroke="#ffb000" stroke-width="2" stroke-linejoin="miter" shape-rendering="crispEdges"/>
<polyline points="221.8,248.7 223.0,172.0 237.9,160.1 249.4,167.4 260.9,161.7 270.1,162.8 283.9,155.9 292.0,158.2 292.0,159.4 305.8,164.7 317.3,160.5 332.3,167.4 347.2,165.1 361.0,165.1 371.4,178.9 382.9,159.4 388.7,162.8 400.2,164.0 414.0,161.7 430.1,152.5 443.9,161.7 455.4,160.1 471.5,160.5 479.6,161.7 489.9,149.0 500.3,149.0 508.3,157.1 522.1,157.8 531.3,160.5 538.2,172.0 544.0,174.3 544.0,173.2 549.8,162.8 557.8,160.5 569.3,161.7 580.8,158.2 592.3,162.4 603.8,162.8 615.3,162.4 626.8,158.2 638.4,161.7 645.3,161.7 649.9,154.8 660.2,170.9 666.0,160.5 672.9,150.9 677.5,159.4 686.7,161.7 698.2,158.2 707.4,154.8 714.3,155.9 723.5,152.5 728.1,155.9 739.6,167.0 746.5,161.7 755.7,161.7 764.9,164.0 769.5,154.8 783.3,150.9 787.9,158.2 796.0,164.0 796.0,160.5 800.6,162.8 807.5,157.1 814.4,153.2 821.3,156.4 828.2,162.8 831.7,160.5 836.3,170.9 844.3,162.8 848.9,153.6 855.8,155.9 865.0,150.2 868.5,147.9 877.7,153.2 885.8,150.2 897.3,154.8 911.1,155.9 915.7,157.1 921.4,162.4 927.2,158.2 934.1,159.4 938.7,154.8 945.6,160.5 952.5,162.8 957.1,153.6 967.0,150.9" fill="none" stroke="#ffb000" stroke-width="2" stroke-linejoin="miter" shape-rendering="crispEdges"/>
<polyline points="41.8,249.0 189.6,249.0" fill="none" stroke="#00ff00" stroke-width="2" stroke-linejoin="miter" shape-rendering="crispEdges"/>
<polyline points="221.8,249.0 270.1,249.0 272.4,249.0 283.9,249.0 292.0,249.0 292.0,249.0 354.1,249.0 361.0,241.1 365.6,231.9 371.4,237.6 379.5,235.3 384.1,243.4 391.0,249.0 476.1,249.0 485.3,244.5 494.5,242.9 503.7,242.2 510.6,249.0 522.1,249.0 544.0,249.0 544.0,249.0 645.3,249.0 652.2,241.1 666.0,245.2 674.0,242.2 679.8,249.0 764.9,249.0 771.8,245.7 783.3,245.2 787.9,249.0 796.0,249.0 796.0,249.0 918.0,249.0 921.4,245.7 934.1,245.2 945.6,245.7 950.2,246.8 952.5,249.0 967.0,249.0" fill="none" stroke="#00ff00" stroke-width="2" stroke-linejoin="miter" shape-rendering="crispEdges"/>
<polyline points="41.8,238.8 44.6,225.0 50.4,213.5 56.1,221.5 59.6,220.4 63.0,230.7 72.2,236.5 76.8,225.0 81.4,225.0 87.2,207.7 95.2,218.1 102.1,231.9 111.3,248.0 115.9,238.8 126.3,236.0 132.1,241.1 139.0,245.7 145.9,239.9 152.8,239.9 157.4,247.5 167.0,242.9 189.6,242.9" fill="none" stroke="#0080ff" stroke-width="2" stroke-linejoin="miter" shape-rendering="crispEdges"/>
<polyline points="221.8,248.0 224.1,243.4 233.3,246.8 242.5,246.8 249.4,236.5 260.9,232.3 267.8,239.9 279.3,242.2 292.0,243.4 292.0,244.5 301.2,247.5 310.4,244.5 321.9,245.7 333.4,241.1 347.2,243.4 354.1,241.1 361.0,235.3 371.4,229.6 381.8,222.7 388.7,226.1 395.6,221.5 400.2,227.3 407.1,242.2 416.3,241.1 418.6,243.4 425.5,227.3 433.5,214.6 439.3,222.7 446.2,231.9 453.1,234.2 457.7,229.6 462.3,216.9 468.1,234.2 473.8,230.7 483.0,238.8 492.2,236.9 503.7,245.7 519.8,236.0 531.3,245.7 540.5,243.4 544.0,235.3 544.0,234.2 552.1,226.1 559.0,224.5 568.2,223.8 573.9,238.8 580.8,245.7 590.0,246.1 600.4,245.7 603.8,248.0 608.4,241.1 617.6,243.4 629.2,244.5 636.1,246.8 645.3,245.7 654.5,239.9 663.7,238.8 669.4,237.6 684.4,235.3 689.0,248.0 695.9,248.0 702.8,245.7 709.7,245.2 712.0,250.0 774.1,250.0 785.6,248.0 796.0,245.7 796.0,246.8 798.3,250.0 967.0,250.0" fill="none" stroke="#0080ff" stroke-width="2" stroke-linejoin="miter" shape-rendering="crispEdges"/>
<g fill="#fff" shape-rendering="crispEdges">
<rect x="40" y="130" width="1" height="121"/>
<rect x="1049" y="130" width="1" height="121"/>
<rect x="37" y="250" width="1016" height="1"/>
<rect x="37" y="130" width="3" height="1"/>
<rect x="1050" y="130" width="3" height="1"/>
<rect x="37" y="142" width="3" height="1"/>
<rect x="1050" y="142" width="3" height="1"/>
<rect x="37" y="154" width="3" height="1"/>
<rect x="1050" y="154" width="3" height="1"/>
<rect x="37" y="166" width="3" height="1"/>
<rect x="1050" y="166" width="3" height="1"/>
<rect x="37" y="178" width="3" height="1"/>
<rect x="1050" y="178" width="3" height="1"/>
<rect x="37" y="190" width="3" height="1"/>
<rect x="1050" y="190" width="3" height="1"/>
<rect x="37" y="202" width="3" height="1"/>
<rect x="1050" y="202" width="3" height="1"/>
<rect x="37" y="214" width="3" height="1"/>
<rect x="1050" y="214" width="3" height="1"/>
<rect x="37" y="226" width="3" height="1"/>
<rect x="1050" y="226" width="3" height="1"/>
<rect x="37" y="238" width="3" height="1"/>
<rect x="1050" y="238" width="3" height="1"/>
<rect x="37" y="250" width="3" height="1"/>
<rect x="1050" y="250" width="3" height="1"/>
<rect x="40" y="251" width="2" height="25"/>
<rect x="47" y="251" width="1" height="3"/>
<rect x="53" y="251" width="1" height="3"/>
<rect x="59" y="251" width="1" height="3"/>
<rect x="65" y="251" width="1" height="3"/>
<rect x="71" y="251" width="1" height="3"/>
<rect x="76" y="251" width="2" height="3"/>
<rect x="83" y="251" width="1" height="3"/>
<rect x="89" y="251" width="1" height="3"/>
<rect x="95" y="251" width="1" height="3"/>
<rect x="101" y="251" width="1" height="3"/>
<rect x="107" y="251" width="1" height="3"/>
<rect x="112" y="251" width="2" height="3"/>
<rect x="119" y="251" width="1" height="3"/>
<rect x="125" y="251" width="1" height="3"/>
<rect x="131" y="251" width="1" height="3"/>
<rect x="137" y="251" width="1" height="3"/>
<rect x="143" y="251" width="1" height="3"/>
<rect x="148" y="251" width="2" height="3"/>
<rect x="155" y="251" width="1" height="3"/>
<rect x="161" y="251" width="1" height="3"/>
<rect x="167" y="251" width="1" height="3"/>
<rect x="173" y="251" width="1" height="3"/>
<rect x="179" y="251" width="1" height="3"/>
<rect x="184" y="251" width="2" height="25"/>
<rect x="191" y="251" width="1" height="3"/>
<rect x="197" y="251" width="1" height="3"/>
<rect x="203" y="251" width="1" height="3"/>
<rect x="209" y="251" width="1" height="3"/>
<rect x="215" y="251" width="1" height="3"/>
<rect x="220" y="251" width="2" height="3"/>
<rect x="227" y="251" width="1" height="3"/>
<rect x="233" y="251" width="1" height="3"/>
<rect x="239" y="251" width="1" height="3"/>
<rect x="245" y="251" width="1" height="3"/>
<rect x="251" y="251" width="1" height="3"/>
<rect x="256" y="251" width="2" height="3"/>
<rect x="263" y="251" width="1" height="3"/>
<rect x="269" y="251" width="1" height="3"/>
<rect x="275" y="251" width="1" height="3"/>
<rect x="281" y="251" width="1" height="3"/>
<rect x="287" y="251" width="1" height="3"/>
<rect x="292" y="251" width="2" height="3"/>
<rect x="299" y="251" width="1" height="3"/>
<rect x="305" y="251" width="1" height="3"/>
<rect x="311" y="251" width="1" height="3"/>
<rect x="317" y="251" width="1" height="3"/>
<rect x="323" y="251" width="1" height="3"/>
<rect x="328" y="251" width="2" height="25"/>
<rect x="335" y="251" width="1" height="3"/>
<rect x="341" y="251" width="1" height="3"/>
<rect x="347" y="251" width="1" height="3"/>
<rect x="353" y="251" width="1" height="3"/>
<rect x="359" y="251" width="1" height="3"/>
<rect x="364" y="251" width="2" height="3"/>
<rect x="371" y="251" width="1" height="3"/>
<rect x="377" y="251" width="1" height="3"/>
<rect x="383" y="251" width="1" height="3"/>
<rect x="389" y="251" width="1" height="3"/>
<rect x="395" y="251" width="1" height="3"/>
<rect x="400" y="251" width="2" height="3"/>
<rect x="407" y="251" width="1" height="3"/>
<rect x="413" y="251" width="1" height="3"/>
<rect x="419" y="251" width="1" height="3"/>
<rect x="425" y="251" width="1" height="3"/>
<rect x="431" y="251" width="1" height="3"/>
<rect x="436" y="251" width="2" height="3"/>
<rect x="443" y="251" width="1" height="3"/>
<rect x="449" y="251" width="1" height="3"/>
<rect x="455" y="251" width="1" height="3"/>
<rect x="461" y="251" width="1" height="3"/>
<rect x="467" y="251" width="1" height="3"/>
<rect x="472" y="251" width="2" height="25"/>
<rect x="479" y="251" width="1" height="3"/>
<rect x="485" y="251" width="1" height="3"/>
<rect x="491" y="251" width="1" height="3"/>
<rect x="497" y="251" width="1" height="3"/>
<rect x="503" y="251" width="1" height="3"/>
<rect x="508" y="251" width="2" height="3"/>
<rect x="515" y="251" width="1" height="3"/>
<rect x="521" y="251" width="1" height="3"/>
<rect x="527" y="251" width="1" height="3"/>
<rect x="533" y="251" width="1" height="3"/>
<rect x="539" y="251" width="1" height="3"/>
<rect x="544" y="251" width="2" height="3"/>
<rect x="551" y="251" width="1" height="3"/>
<rect x="557" y="251" width="1" height="3"/>
<rect x="563" y="251" width="1" height="3"/>
<rect x="569" y="251" width="1" height="3"/>
<rect x="575" y="251" width="1" height="3"/>
<rect x="580" y="251" width="2" height="3"/>
<rect x="587" y="251" width="1" height="3"/>
<rect x="593" y="251" width="1" height="3"/>
<rect x="599" y="251" width="1" height="3"/>
<rect x="605" y="251" width="1" height="3"/>
<rect x="611" y="251" width="1" height="3"/>
<rect x="616" y="251" width="2" height="25"/>
<rect x="623" y="251" width="1" height="3"/>
<rect x="629" y="251" width="1" height="3"/>
<rect x="635" y="251" width="1" height="3"/>
<rect x="641" y="251" width="1" height="3"/>
<rect x="647" y="251" width="1" height="3"/>
<rect x="652" y="251" width="2" height="3"/>
<rect x="659" y="251" width="1" height="3"/>
<rect x="665" y="251" width="1" height="3"/>
<rect x="671" y="251" width="1" height="3"/>
<rect x="677" y="251" width="1" height="3"/>
<rect x="683" y="251" width="1" height="3"/>
<rect x="688" y="251" width="2" height="3"/>
<rect x="695" y="251" width="1" height="3"/>
<rect x="701" y="251" width="1" height="3"/>
<rect x="707" y="251" width="1" height="3"/>
<rect x="713" y="251" width="1" height="3"/>
<rect x="719" y="251" width="1" height="3"/>
<rect x="724" y="251" width="2" height="3"/>
<rect x="731" y="251" width="1" height="3"/>
<rect x="737" y="251" width="1" height="3"/>
<rect x="743" y="251" width="1" height="3"/>
<rect x="749" y="251" width="1" height="3"/>
<rect x="755" y="251" width="1" height="3"/>
<rect x="760" y="251" width="2" height="25"/>
<rect x="767" y="251" width="1" height="3"/>
<rect x="773" y="251" width="1" height="3"/>
<rect x="779" y="251" width="1" height="3"/>
<rect x="785" y="251" width="1" height="3"/>
<rect x="791" y="251" width="1" height="3"/>
<rect x="796" y="251" width="2" height="3"/>
<rect x="803" y="251" width="1" height="3"/>
<rect x="809" y="251" width="1" height="3"/>
<rect x="815" y="251" width="1" height="3"/>
<rect x="821" y="251" width="1" height="3"/>
<rect x="827" y="251" width="1" height="3"/>
<rect x="832" y="251" width="2" height="3"/>
<rect x="839" y="251" width="1" height="3"/>
<rect x="845" y="251" width="1" height="3"/>
<rect x="851" y="251" width="1" height="3"/>
<rect x="857" y="251" width="1" height="3"/>
<rect x="863" y="251" width="1" height="3"/>
<rect x="868" y="251" width="2" height="3"/>
<rect x="875" y="251" width="1" height="3"/>
<rect x="881" y="251" width="1" height="3"/>
<rect x="887" y="251" width="1" height="3"/>
<rect x="893" y="251" width="1" height="3"/>
<rect x="899" y="251" width="1" height="3"/>
<rect x="904" y="251" width="2" height="25"/>
<rect x="911" y="251" width="1" height="3"/>
<rect x="917" y="251" width="1" height="3"/>
<rect x="923" y="251" width="1" height="3"/>
<rect x="929" y="251" width="1" height="3"/>
<rect x="935" y="251" width="1" height="3"/>
<rect x="940" y="251" width="2" height="3"/>
<rect x="947" y="251" width="1" height="3"/>
<rect x="953" y="251" width="1" height="3"/>
<rect x="959" y="251" width="1" height="3"/>
<rect x="965" y="251" width="1" height="3"/>
<rect x="971" y="251" width="1" height="3"/>
<rect x="976" y="251" width="2" height="3"/>
<rect x="983" y="251" width="1" height="3"/>
<rect x="989" y="251" width="1" height="3"/>
<rect x="995" y="251" width="1" height="3"/>
<rect x="1001" y="251" width="1" height="3"/>
<rect x="1007" y="251" width="1" height="3"/>
<rect x="1012" y="251" width="2" height="3"/>
<rect x="1019" y="251" width="1" height="3"/>
<rect x="1025" y="251" width="1" height="3"/>
<rect x="1031" y="251" width="1" height="3"/>
<rect x="1037" y="251" width="1" height="3"/>
<rect x="1043" y="251" width="1" height="3"/>
<rect x="1048" y="251" width="2" height="25"/>
</g>
<g font-family='"Liberation Mono", monospace' fill="#fff">
<text x="32" y="136" font-size="11.8" fill="#fff" text-anchor="end" textLength="24" lengthAdjust="spacingAndGlyphs" >100%</text>
<text x="32" y="256" font-size="11.8" fill="#fff" text-anchor="end" textLength="12" lengthAdjust="spacingAndGlyphs" >0%</text>
<text x="1058" y="135" font-size="11.8" fill="#fff" text-anchor="start" textLength="30" lengthAdjust="spacingAndGlyphs" >42076</text>
<text x="1058" y="159" font-size="11.8" fill="#fff" text-anchor="start" textLength="30" lengthAdjust="spacingAndGlyphs" >33661</text>
<text x="1058" y="183" font-size="11.8" fill="#fff" text-anchor="start" textLength="30" lengthAdjust="spacingAndGlyphs" >25246</text>
<text x="1058" y="207" font-size="11.8" fill="#fff" text-anchor="start" textLength="30" lengthAdjust="spacingAndGlyphs" >16830</text>
<text x="1058" y="231" font-size="11.8" fill="#fff" text-anchor="start" textLength="24" lengthAdjust="spacingAndGlyphs" >8415</text>
<text x="1058" y="255" font-size="11.8" fill="#fff" text-anchor="start" textLength="6" lengthAdjust="spacingAndGlyphs" >0</text>
<text x="45" y="276" font-size="11.8" fill="#fff" text-anchor="start" textLength="43" lengthAdjust="spacingAndGlyphs" >01.Dec.</text>
<text x="77.5" y="263" font-size="8.2" fill="#fff" text-anchor="middle" font-weight="bold" textLength="4" lengthAdjust="spacingAndGlyphs" >6</text>
<text x="113.5" y="263" font-size="8.2" fill="#fff" text-anchor="middle" font-weight="bold" textLength="9" lengthAdjust="spacingAndGlyphs" >12</text>
<text x="149.5" y="263" font-size="8.2" fill="#fff" text-anchor="middle" font-weight="bold" textLength="9" lengthAdjust="spacingAndGlyphs" >18</text>
<text x="189" y="276" font-size="11.8" fill="#fff" text-anchor="start" textLength="43" lengthAdjust="spacingAndGlyphs" >02.Dec.</text>
<text x="221.5" y="263" font-size="8.2" fill="#fff" text-anchor="middle" font-weight="bold" textLength="4" lengthAdjust="spacingAndGlyphs" >6</text>
<text x="257.5" y="263" font-size="8.2" fill="#fff" text-anchor="middle" font-weight="bold" textLength="9" lengthAdjust="spacingAndGlyphs" >12</text>
<text x="293.5" y="263" font-size="8.2" fill="#fff" text-anchor="middle" font-weight="bold" textLength="9" lengthAdjust="spacingAndGlyphs" >18</text>
<text x="333" y="276" font-size="11.8" fill="#fff" text-anchor="start" textLength="43" lengthAdjust="spacingAndGlyphs" >03.Dec.</text>
<text x="365.5" y="263" font-size="8.2" fill="#fff" text-anchor="middle" font-weight="bold" textLength="4" lengthAdjust="spacingAndGlyphs" >6</text>
<text x="401.5" y="263" font-size="8.2" fill="#fff" text-anchor="middle" font-weight="bold" textLength="9" lengthAdjust="spacingAndGlyphs" >12</text>
<text x="437.5" y="263" font-size="8.2" fill="#fff" text-anchor="middle" font-weight="bold" textLength="9" lengthAdjust="spacingAndGlyphs" >18</text>
<text x="477" y="276" font-size="11.8" fill="#fff" text-anchor="start" textLength="43" lengthAdjust="spacingAndGlyphs" >04.Dec.</text>
<text x="509.5" y="263" font-size="8.2" fill="#fff" text-anchor="middle" font-weight="bold" textLength="4" lengthAdjust="spacingAndGlyphs" >6</text>
<text x="545.5" y="263" font-size="8.2" fill="#fff" text-anchor="middle" font-weight="bold" textLength="9" lengthAdjust="spacingAndGlyphs" >12</text>
<text x="581.5" y="263" font-size="8.2" fill="#fff" text-anchor="middle" font-weight="bold" textLength="9" lengthAdjust="spacingAndGlyphs" >18</text>
<text x="621" y="276" font-size="11.8" fill="#fff" text-anchor="start" textLength="43" lengthAdjust="spacingAndGlyphs" >05.Dec.</text>
<text x="653.5" y="263" font-size="8.2" fill="#fff" text-anchor="middle" font-weight="bold" textLength="4" lengthAdjust="spacingAndGlyphs" >6</text>
<text x="689.5" y="263" font-size="8.2" fill="#fff" text-anchor="middle" font-weight="bold" textLength="9" lengthAdjust="spacingAndGlyphs" >12</text>
<text x="725.5" y="263" font-size="8.2" fill="#fff" text-anchor="middle" font-weight="bold" textLength="9" lengthAdjust="spacingAndGlyphs" >18</text>
<text x="765" y="276" font-size="11.8" fill="#fff" text-anchor="start" textLength="43" lengthAdjust="spacingAndGlyphs" >06.Dec.</text>
<text x="797.5" y="263" font-size="8.2" fill="#fff" text-anchor="middle" font-weight="bold" textLength="4" lengthAdjust="spacingAndGlyphs" >6</text>
<text x="833.5" y="263" font-size="8.2" fill="#fff" text-anchor="middle" font-weight="bold" textLength="9" lengthAdjust="spacingAndGlyphs" >12</text>
<text x="869.5" y="263" font-size="8.2" fill="#fff" text-anchor="middle" font-weight="bold" textLength="9" lengthAdjust="spacingAndGlyphs" >18</text>
<text x="909" y="276" font-size="11.8" fill="#fff" text-anchor="start" textLength="43" lengthAdjust="spacingAndGlyphs" >07.Dec.</text>
<text x="941.5" y="263" font-size="8.2" fill="#fff" text-anchor="middle" font-weight="bold" textLength="4" lengthAdjust="spacingAndGlyphs" >6</text>
<text x="977.5" y="263" font-size="8.2" fill="#fff" text-anchor="middle" font-weight="bold" textLength="9" lengthAdjust="spacingAndGlyphs" >12</text>
<text x="1013.5" y="263" font-size="8.2" fill="#fff" text-anchor="middle" font-weight="bold" textLength="9" lengthAdjust="spacingAndGlyphs" >18</text>
</g>
</g>
</svg>
</body></html>
